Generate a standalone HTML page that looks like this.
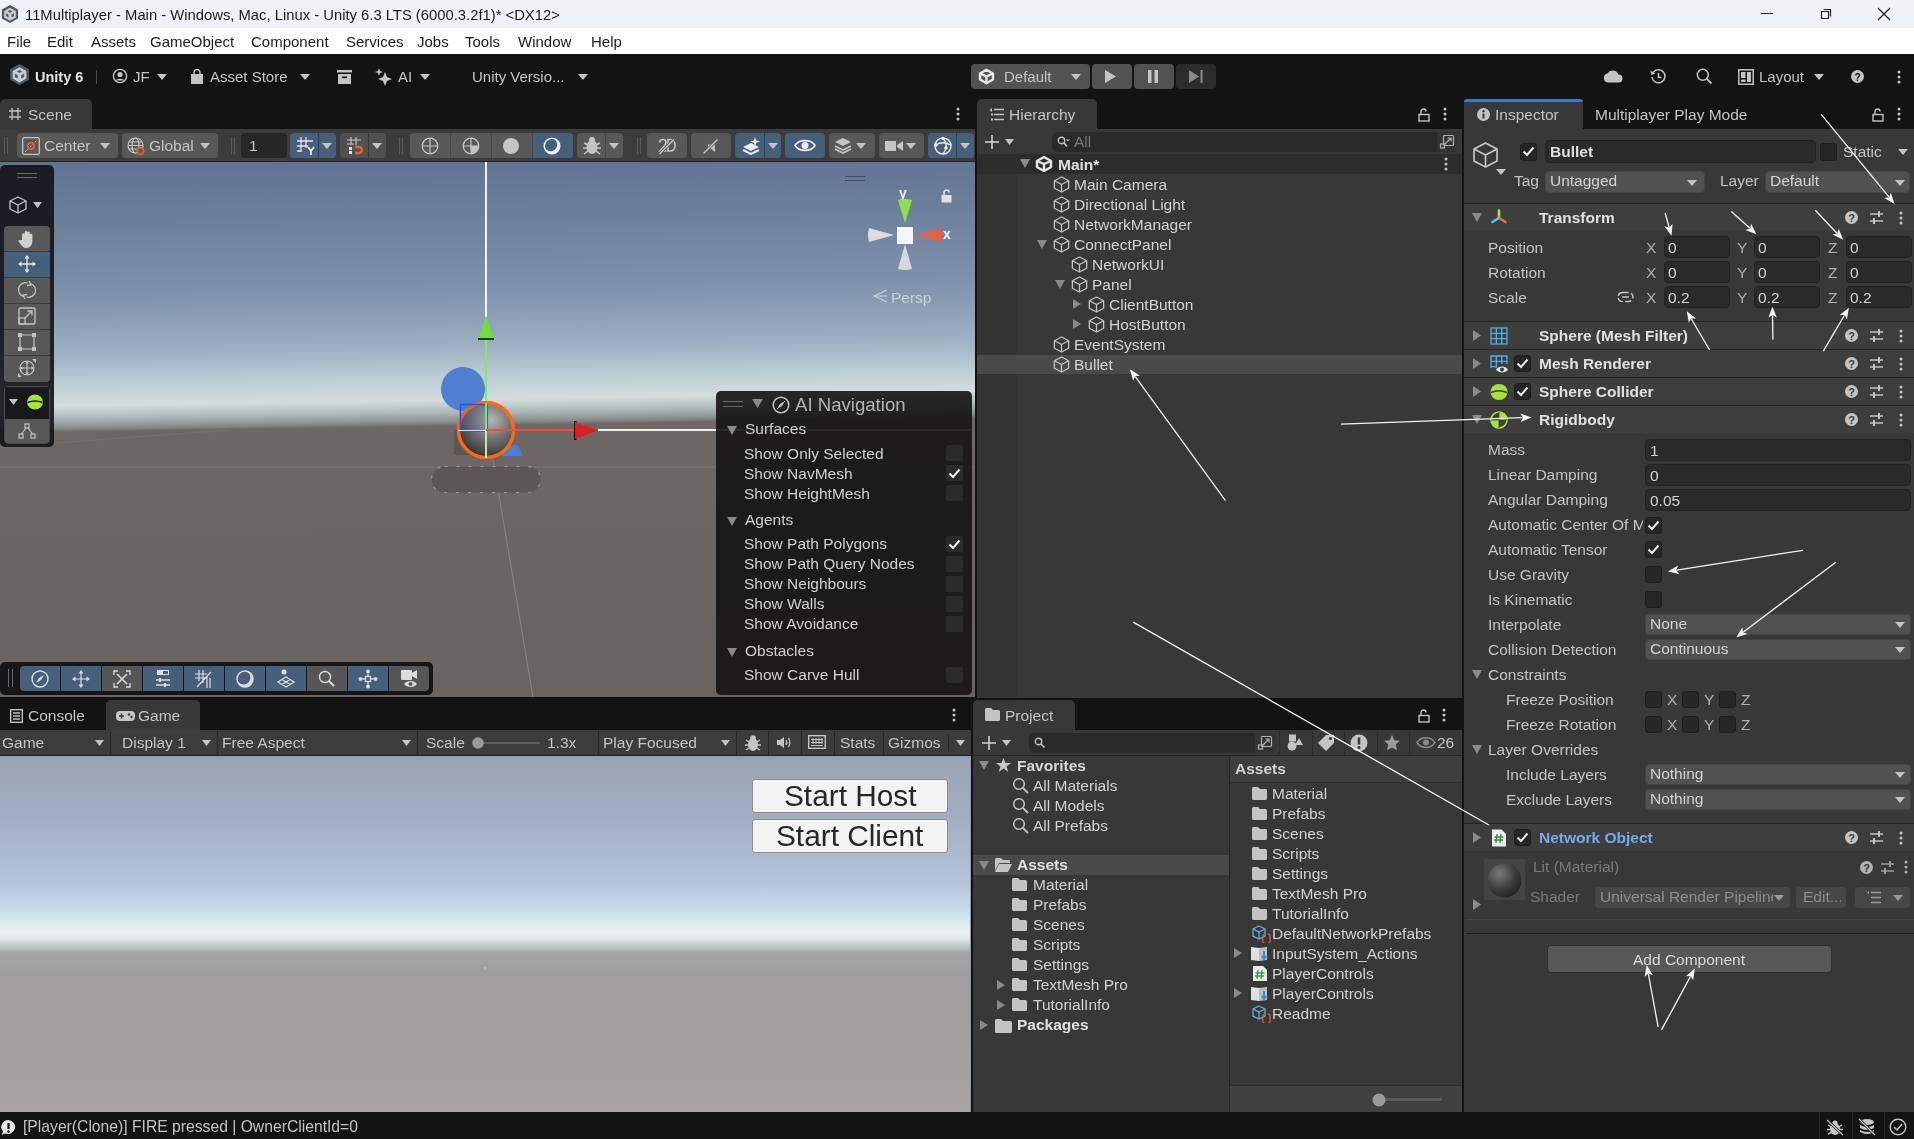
<!DOCTYPE html>
<html><head><meta charset="utf-8"><style>
*{margin:0;padding:0;box-sizing:border-box}
html,body{width:1914px;height:1139px;overflow:hidden;background:#131313}
body{position:relative;font-family:"Liberation Sans",sans-serif}
.a{position:absolute}
.t{white-space:nowrap;line-height:1;will-change:transform}
</style></head><body>
<div class="a" style="left:0px;top:0px;width:1914px;height:28px;background:#eef2f7;"></div>
<svg class="a" style="left:1px;top:5px;" width="18" height="18" viewBox="0 0 18 18"><path d="M9.00 0.00L17.10 4.50L17.10 13.50L9.00 18.00L0.90 13.50L0.90 4.50Z" fill="#4e5964"/><path d="M9.00 2.70L14.85 6.03L14.85 12.42L9.00 15.75L3.15 12.42L3.15 6.03Z" fill="#c9cdd2"/><path d="M9.00 5.04L11.34 6.39L9.00 7.74L6.66 6.39Z" fill="#4e5964"/><path d="M5.04 8.37L7.47 9.72L7.47 12.42L5.04 11.07Z" fill="#4e5964"/><path d="M12.96 8.37L10.53 9.72L10.53 12.42L12.96 11.07Z" fill="#4e5964"/></svg>
<div class="a t" style="left:25px;top:7.97px;font-size:14.8px;color:#1a1a1a;">11Multiplayer - Main - Windows, Mac, Linux - Unity 6.3 LTS (6000.3.2f1)* &lt;DX12&gt;</div>
<div class="a" style="left:1761px;top:13px;width:12px;height:1.3px;background:#222;"></div>
<svg class="a" style="left:1818px;top:6px;" width="16" height="16" viewBox="0 0 16 16"><path d="M3.5 5.5h7v7h-7z M5.5 3.5h7v7" fill="none" stroke="#222" stroke-width="1.2"/></svg>
<svg class="a" style="left:1876px;top:6px;" width="16" height="16" viewBox="0 0 16 16"><path d="M2 2L14 14M14 2L2 14" stroke="#222" stroke-width="1.3"/></svg>
<div class="a" style="left:0px;top:28px;width:1914px;height:26px;background:#ffffff;"></div>
<div class="a t" style="left:6.5px;top:33.80px;font-size:15px;color:#1a1a1a;">File</div>
<div class="a t" style="left:47px;top:33.80px;font-size:15px;color:#1a1a1a;">Edit</div>
<div class="a t" style="left:91px;top:33.80px;font-size:15px;color:#1a1a1a;">Assets</div>
<div class="a t" style="left:150px;top:33.80px;font-size:15px;color:#1a1a1a;">GameObject</div>
<div class="a t" style="left:251px;top:33.80px;font-size:15px;color:#1a1a1a;">Component</div>
<div class="a t" style="left:346px;top:33.80px;font-size:15px;color:#1a1a1a;">Services</div>
<div class="a t" style="left:417px;top:33.80px;font-size:15px;color:#1a1a1a;">Jobs</div>
<div class="a t" style="left:465px;top:33.80px;font-size:15px;color:#1a1a1a;">Tools</div>
<div class="a t" style="left:518px;top:33.80px;font-size:15px;color:#1a1a1a;">Window</div>
<div class="a t" style="left:591px;top:33.80px;font-size:15px;color:#1a1a1a;">Help</div>
<div class="a" style="left:0px;top:54px;width:1914px;height:45px;background:#131313;"></div>
<svg class="a" style="left:9px;top:64px;" width="21" height="21" viewBox="0 0 21 21"><path d="M10.50 0.00L19.95 5.25L19.95 15.75L10.50 21.00L1.05 15.75L1.05 5.25Z" fill="#4e5964"/><path d="M10.50 3.15L17.32 7.04L17.32 14.49L10.50 18.38L3.68 14.49L3.68 7.04Z" fill="#c9cdd2"/><path d="M10.50 5.88L13.23 7.46L10.50 9.03L7.77 7.46Z" fill="#4e5964"/><path d="M5.88 9.77L8.72 11.34L8.72 14.49L5.88 12.92Z" fill="#4e5964"/><path d="M15.12 9.77L12.29 11.34L12.29 14.49L15.12 12.92Z" fill="#4e5964"/></svg>
<div class="a t" style="left:35px;top:69.73px;font-size:14.5px;color:#e6e6e6;font-weight:bold;">Unity 6</div>
<div class="a" style="left:96px;top:70px;width:1px;height:14px;background:#4a4a4a;"></div>
<svg class="a" style="left:112px;top:68px;" width="16" height="16" viewBox="0 0 16 16"><circle cx="8" cy="8" r="6.6" fill="none" stroke="#c4c4c4" stroke-width="1.4"/><circle cx="8" cy="6.5" r="2.6" fill="#c4c4c4"/><path d="M3.5 12.5C5 10 11 10 12.5 12.5" fill="#c4c4c4"/></svg>
<div class="a t" style="left:133px;top:69.30px;font-size:15px;color:#c4c4c4;">JF</div>
<svg class="a" style="left:156.5px;top:74.0px;" width="10" height="6" viewBox="0 0 10 6"><path d="M0 0H10L5.0 6Z" fill="#c4c4c4"/></svg>
<svg class="a" style="left:190px;top:69px;" width="14" height="16" viewBox="0 0 14 16"><path d="M1 5h12v10H1z" fill="#c4c4c4"/><path d="M4 5V3.5a3 3 0 0 1 6 0V5" fill="none" stroke="#c4c4c4" stroke-width="1.4"/></svg>
<div class="a t" style="left:210px;top:69.30px;font-size:15px;color:#c4c4c4;">Asset Store</div>
<svg class="a" style="left:300.0px;top:74.0px;" width="10" height="6" viewBox="0 0 10 6"><path d="M0 0H10L5.0 6Z" fill="#c4c4c4"/></svg>
<svg class="a" style="left:337px;top:70px;" width="15" height="14" viewBox="0 0 15 14"><rect x="0" y="0" width="15" height="2.5" fill="#c4c4c4"/><path d="M1 4h13v10H1z" fill="#c4c4c4"/><rect x="5" y="6.5" width="5" height="1.6" fill="#131313"/></svg>
<svg class="a" style="left:375px;top:68px;" width="19" height="18" viewBox="0 0 19 18"><path d="M10 4L12 9L17 11L12 13L10 18L8 13L3 11L8 9Z" fill="#c4c4c4"/><path d="M4 0L5 3L8 4L5 5L4 8L3 5L0 4L3 3Z" fill="#c4c4c4"/></svg>
<div class="a t" style="left:398px;top:69.30px;font-size:15px;color:#c4c4c4;">AI</div>
<svg class="a" style="left:419.5px;top:74.0px;" width="10" height="6" viewBox="0 0 10 6"><path d="M0 0H10L5.0 6Z" fill="#c4c4c4"/></svg>
<div class="a t" style="left:472px;top:69.30px;font-size:15px;color:#c4c4c4;">Unity Versio...</div>
<svg class="a" style="left:577.5px;top:74.0px;" width="10" height="6" viewBox="0 0 10 6"><path d="M0 0H10L5.0 6Z" fill="#c4c4c4"/></svg>
<div class="a" style="left:971px;top:64px;width:119px;height:25px;background:#525252;border-radius:4px;"></div>
<svg class="a" style="left:978px;top:68px;" width="17" height="17" viewBox="0 0 17 17"><g fill="none" stroke="#e8e8e8" stroke-width="2.38" stroke-linejoin="round"><path d="M8.5 1.7000000000000002L14.96 5.44V11.56L8.5 15.3L2.04 11.56V5.44Z"/><path d="M8.5 8.5V15.3M8.5 8.5L2.04 5.44M8.5 8.5L14.96 5.44"/></g></svg>
<div class="a t" style="left:1004px;top:69.30px;font-size:15px;color:#c4c4c4;">Default</div>
<svg class="a" style="left:1071.0px;top:74.0px;" width="10" height="6" viewBox="0 0 10 6"><path d="M0 0H10L5.0 6Z" fill="#c4c4c4"/></svg>
<div class="a" style="left:1092px;top:64px;width:40px;height:25px;background:#525252;border-radius:4px;"></div>
<svg class="a" style="left:1105px;top:70px;" width="12" height="13" viewBox="0 0 12 13"><path d="M0 0L11 6.5L0 13Z" fill="#c4c4c4"/></svg>
<div class="a" style="left:1134px;top:64px;width:40px;height:25px;background:#525252;border-radius:4px;"></div>
<svg class="a" style="left:1147px;top:70px;" width="13" height="13" viewBox="0 0 13 13"><rect x="1" y="0" width="3.5" height="13" fill="#c4c4c4"/><rect x="7.5" y="0" width="3.5" height="13" fill="#c4c4c4"/></svg>
<div class="a" style="left:1176px;top:64px;width:40px;height:25px;background:#2c2c2c;border-radius:4px;"></div>
<svg class="a" style="left:1189px;top:70px;" width="14" height="13" viewBox="0 0 14 13"><path d="M0 0L10 6.5L0 13Z" fill="#8a8a8a"/><rect x="11.5" y="0" width="2" height="13" fill="#8a8a8a"/></svg>
<svg class="a" style="left:1603px;top:69px;" width="20" height="14" viewBox="0 0 20 14"><path d="M5 13.5A4.5 4.5 0 0 1 4.5 4.6A6 6 0 0 1 15.5 5.5A4 4 0 0 1 15.5 13.5Z" fill="#c4c4c4"/></svg>
<svg class="a" style="left:1650px;top:68px;" width="17" height="17" viewBox="0 0 17 17"><path d="M3.2 4.5A6.5 6.5 0 1 1 2 9" fill="none" stroke="#c4c4c4" stroke-width="1.5"/><path d="M0.5 2.5L1.2 7L5.5 5.6Z" fill="#c4c4c4"/><path d="M8.5 5V9.5H11.5" fill="none" stroke="#c4c4c4" stroke-width="1.6"/></svg>
<svg class="a" style="left:1696px;top:68px;" width="17" height="17" viewBox="0 0 17 17"><circle cx="6.8" cy="6.8" r="5.5" fill="none" stroke="#c4c4c4" stroke-width="1.5"/><path d="M10.8 10.8L15.5 15.5" stroke="#c4c4c4" stroke-width="1.8"/></svg>
<svg class="a" style="left:1738px;top:69px;" width="16" height="16" viewBox="0 0 16 16"><rect x="0.8" y="0.8" width="14.4" height="14.4" fill="none" stroke="#c4c4c4" stroke-width="1.5"/><rect x="3" y="3" width="4.5" height="6" fill="#c4c4c4"/><rect x="9" y="3" width="4" height="10" fill="#c4c4c4"/><rect x="3" y="10.5" width="4.5" height="2.5" fill="#c4c4c4"/></svg>
<div class="a t" style="left:1759px;top:69.30px;font-size:15px;color:#c4c4c4;">Layout</div>
<svg class="a" style="left:1814.0px;top:74.0px;" width="10" height="6" viewBox="0 0 10 6"><path d="M0 0H10L5.0 6Z" fill="#c4c4c4"/></svg>
<svg class="a" style="left:1851px;top:70px;" width="13" height="13" viewBox="0 0 13 13"><circle cx="6.5" cy="6.5" r="6.5" fill="#c4c4c4"/><text x="6.5" y="10.5" font-size="10" font-weight="bold" text-anchor="middle" fill="#131313" font-family="Liberation Sans">?</text></svg>
<svg class="a" style="left:1896px;top:69px;" width="6" height="16" viewBox="0 0 6 16"><circle cx="3" cy="3" r="1.5" fill="#c4c4c4"/><circle cx="3" cy="8" r="1.5" fill="#c4c4c4"/><circle cx="3" cy="13" r="1.5" fill="#c4c4c4"/></svg>
<div class="a" style="left:0px;top:99px;width:92px;height:31px;background:#383838;border-radius:5px 5px 0 0;"></div>
<svg class="a" style="left:8px;top:107px;" width="14" height="14" viewBox="0 0 14 14"><path d="M4 1V13M10 1V13M1 4H13M1 10H13" stroke="#c4c4c4" stroke-width="1.3"/></svg>
<div class="a t" style="left:28px;top:106.88px;font-size:15.5px;color:#c4c4c4;">Scene</div>
<svg class="a" style="left:955px;top:106px;" width="6" height="16" viewBox="0 0 6 16"><circle cx="3" cy="3" r="1.5" fill="#c4c4c4"/><circle cx="3" cy="8" r="1.5" fill="#c4c4c4"/><circle cx="3" cy="13" r="1.5" fill="#c4c4c4"/></svg>
<div class="a" style="left:0px;top:129px;width:975px;height:33px;background:#3c3c3c;"></div>
<div class="a" style="left:0px;top:161px;width:975px;height:1px;background:#232323;"></div>
<div class="a" style="left:4px;top:137px;width:1px;height:17px;background:#5a5a5a;"></div>
<div class="a" style="left:7px;top:137px;width:1px;height:17px;background:#5a5a5a;"></div>
<div class="a" style="left:17px;top:133px;width:101px;height:25px;background:#585858;border-radius:4px;"></div>
<svg class="a" style="left:22px;top:137px;" width="18" height="18" viewBox="0 0 18 18"><rect x="0.7" y="0.7" width="16.6" height="16.6" rx="1.5" fill="none" stroke="#c4c4c4" stroke-width="1.3"/><path d="M3 15L15 3" stroke="#c4c4c4" stroke-width="1" stroke-dasharray="2 1.5"/><circle cx="9" cy="9" r="3.2" fill="none" stroke="#f0602a" stroke-width="1.6"/></svg>
<div class="a t" style="left:44px;top:137.88px;font-size:15.5px;color:#c4c4c4;">Center</div>
<svg class="a" style="left:99.5px;top:142.5px;" width="10" height="6" viewBox="0 0 10 6"><path d="M0 0H10L5.0 6Z" fill="#c4c4c4"/></svg>
<div class="a" style="left:122px;top:133px;width:96px;height:25px;background:#585858;border-radius:4px;"></div>
<svg class="a" style="left:127px;top:137px;" width="19" height="19" viewBox="0 0 19 19"><circle cx="8.5" cy="8.5" r="7.5" fill="none" stroke="#c4c4c4" stroke-width="1.2"/><ellipse cx="8.5" cy="8.5" rx="3.5" ry="7.5" fill="none" stroke="#c4c4c4" stroke-width="1.2"/><path d="M1 8.5H16M2 5H15M2 12H15" stroke="#c4c4c4" stroke-width="1.1"/><circle cx="13.5" cy="14" r="3.3" fill="#585858" stroke="#f0602a" stroke-width="1.7"/></svg>
<div class="a t" style="left:149px;top:137.88px;font-size:15.5px;color:#c4c4c4;">Global</div>
<svg class="a" style="left:200.0px;top:142.5px;" width="10" height="6" viewBox="0 0 10 6"><path d="M0 0H10L5.0 6Z" fill="#c4c4c4"/></svg>
<div class="a" style="left:231px;top:137px;width:1px;height:17px;background:#5a5a5a;"></div>
<div class="a" style="left:234px;top:137px;width:1px;height:17px;background:#5a5a5a;"></div>
<div class="a" style="left:241px;top:133px;width:46px;height:25px;background:#262626;border-radius:4px;"></div>
<div class="a t" style="left:249px;top:137.88px;font-size:15.5px;color:#c4c4c4;">1</div>
<div class="a" style="left:290px;top:133px;width:46px;height:25px;background:#46607c;border-radius:4px;"></div>
<div class="a" style="left:318px;top:133px;width:1px;height:25px;background:#2f4157;"></div>
<svg class="a" style="left:296px;top:136px;" width="20" height="19" viewBox="0 0 20 19"><path d="M5 1V16M10 1V12M1 5H17M1 10H12M1 15H5" stroke="#e6e6e6" stroke-width="1.3"/><path d="M12 11L15 15L18 11M15 15V19" stroke="#e6e6e6" stroke-width="1.8" fill="none"/></svg>
<svg class="a" style="left:322.0px;top:142.5px;" width="10" height="6" viewBox="0 0 10 6"><path d="M0 0H10L5.0 6Z" fill="#c4c4c4"/></svg>
<div class="a" style="left:340px;top:133px;width:46px;height:25px;background:#505050;border-radius:4px;"></div>
<div class="a" style="left:368px;top:133px;width:1px;height:25px;background:#3a3a3a;"></div>
<svg class="a" style="left:346px;top:136px;" width="20" height="19" viewBox="0 0 20 19"><path d="M5 1V9M10 1V9M1 4H15M1 8H8" stroke="#c4c4c4" stroke-width="1.2"/><rect x="3" y="11" width="3" height="3" fill="#e6e6e6"/><rect x="3" y="15" width="3" height="3" fill="#e6e6e6"/><path d="M9 11H13A3 3 0 0 1 13 17H9" fill="none" stroke="#f0602a" stroke-width="2.4"/></svg>
<svg class="a" style="left:372.0px;top:142.5px;" width="10" height="6" viewBox="0 0 10 6"><path d="M0 0H10L5.0 6Z" fill="#c4c4c4"/></svg>
<div class="a" style="left:399px;top:137px;width:1px;height:17px;background:#5a5a5a;"></div>
<div class="a" style="left:402px;top:137px;width:1px;height:17px;background:#5a5a5a;"></div>
<div class="a" style="left:410px;top:133px;width:163px;height:25px;background:#585858;border-radius:4px;"></div>
<div class="a" style="left:532px;top:133px;width:41px;height:25px;background:#46607c;border-radius:0 4px 4px 0;"></div>
<div class="a" style="left:450px;top:133px;width:1px;height:25px;background:#474747;"></div>
<div class="a" style="left:491px;top:133px;width:1px;height:25px;background:#474747;"></div>
<div class="a" style="left:532px;top:133px;width:1px;height:25px;background:#474747;"></div>
<svg class="a" style="left:421px;top:137px;" width="18" height="18" viewBox="0 0 18 18"><circle cx="9" cy="9" r="7.8" fill="none" stroke="#c4c4c4" stroke-width="1.3"/><path d="M1.5 9H16.5M9 1.5V16.5" stroke="#c4c4c4" stroke-width="1.2"/></svg>
<svg class="a" style="left:462px;top:137px;" width="18" height="18" viewBox="0 0 18 18"><circle cx="9" cy="9" r="7.8" fill="none" stroke="#c4c4c4" stroke-width="1.3"/><path d="M1.5 9H16.5M9 1.5V16.5" stroke="#c4c4c4" stroke-width="1.2"/><path d="M16.5 9A7.5 7.5 0 0 1 9 16.5V9Z" fill="#c4c4c4"/></svg>
<svg class="a" style="left:502px;top:137px;" width="18" height="18" viewBox="0 0 18 18"><circle cx="9" cy="9" r="8" fill="#c4c4c4"/></svg>
<svg class="a" style="left:543px;top:137px;" width="18" height="18" viewBox="0 0 18 18"><circle cx="9" cy="9" r="7.8" fill="#ececec"/><circle cx="7.6" cy="7.6" r="6.6" fill="#46607c"/><circle cx="9" cy="9" r="7.8" fill="none" stroke="#ececec" stroke-width="1.5"/></svg>
<div class="a" style="left:577px;top:133px;width:46px;height:25px;background:#585858;border-radius:4px;"></div>
<div class="a" style="left:605px;top:133px;width:1px;height:25px;background:#474747;"></div>
<svg class="a" style="left:582px;top:136px;" width="20" height="19" viewBox="0 0 20 19"><ellipse cx="10" cy="11" rx="5.5" ry="7" fill="#c4c4c4"/><circle cx="10" cy="4" r="3" fill="#c4c4c4"/><path d="M2 7L6 9M18 7L14 9M1 12H5M19 12H15M2 18L6 15M18 18L14 15" stroke="#c4c4c4" stroke-width="1.5"/></svg>
<svg class="a" style="left:609.0px;top:142.5px;" width="10" height="6" viewBox="0 0 10 6"><path d="M0 0H10L5.0 6Z" fill="#c4c4c4"/></svg>
<div class="a" style="left:637px;top:137px;width:1px;height:17px;background:#5a5a5a;"></div>
<div class="a" style="left:640px;top:137px;width:1px;height:17px;background:#5a5a5a;"></div>
<div class="a" style="left:647px;top:133px;width:40px;height:25px;background:#585858;border-radius:4px;"></div>
<svg class="a" style="left:657px;top:137px;" width="20" height="18" viewBox="0 0 20 18"><path d="M2.5 5.5Q3 2.5 6 2.5Q9 2.5 9 5.5Q9 7.5 6.5 10L3 14H9.5" fill="none" stroke="#c4c4c4" stroke-width="1.6"/><path d="M11 2.5H13Q18 2.5 18 8.5Q18 14 13 14H11Z" fill="none" stroke="#c4c4c4" stroke-width="1.6"/><path d="M2.5 17L17 2.5" stroke="#585858" stroke-width="3"/><path d="M2.5 17L17 2.5" stroke="#c4c4c4" stroke-width="1.4"/></svg>
<div class="a" style="left:691px;top:133px;width:40px;height:25px;background:#585858;border-radius:4px;"></div>
<svg class="a" style="left:701px;top:137px;" width="20" height="18" viewBox="0 0 20 18"><path d="M7 7.5H9.5L14 4V15L9.5 11.5H7Z" fill="#c4c4c4"/><path d="M2.5 16.5L16.5 2.5" stroke="#585858" stroke-width="3"/><path d="M2.5 16.5L16.5 2.5" stroke="#c4c4c4" stroke-width="1.4"/></svg>
<div class="a" style="left:735px;top:133px;width:46px;height:25px;background:#46607c;border-radius:4px;"></div>
<div class="a" style="left:764px;top:133px;width:1px;height:25px;background:#2f4157;"></div>
<svg class="a" style="left:742px;top:136px;" width="20" height="19" viewBox="0 0 20 19"><path d="M1 11L9 7L17 11L9 15Z" fill="#ececec"/><path d="M1 14L9 18L17 14" stroke="#ececec" stroke-width="2" fill="none"/><path d="M13 1L14.2 4.5L18 5.5L14.2 6.7L13 10L11.8 6.7L8 5.5L11.8 4.5Z" fill="#ececec"/></svg>
<svg class="a" style="left:768.0px;top:142.5px;" width="10" height="6" viewBox="0 0 10 6"><path d="M0 0H10L5.0 6Z" fill="#c4c4c4"/></svg>
<div class="a" style="left:785px;top:133px;width:40px;height:25px;background:#46607c;border-radius:4px;"></div>
<svg class="a" style="left:794px;top:139px;" width="22" height="13" viewBox="0 0 22 13"><path d="M1 6.5C5 0 17 0 21 6.5C17 13 5 13 1 6.5Z" fill="none" stroke="#ececec" stroke-width="1.6"/><circle cx="11" cy="6.5" r="3.5" fill="#ececec"/></svg>
<div class="a" style="left:829px;top:133px;width:46px;height:25px;background:#585858;border-radius:4px;"></div>
<svg class="a" style="left:834px;top:137px;" width="18" height="17" viewBox="0 0 18 17"><path d="M1 5L9 1L17 5L9 9Z" fill="#c4c4c4"/><path d="M1 9L9 13L17 9M1 12L9 16L17 12" stroke="#c4c4c4" stroke-width="1.8" fill="none"/></svg>
<svg class="a" style="left:856.0px;top:142.5px;" width="10" height="6" viewBox="0 0 10 6"><path d="M0 0H10L5.0 6Z" fill="#c4c4c4"/></svg>
<div class="a" style="left:879px;top:133px;width:45px;height:25px;background:#585858;border-radius:4px;"></div>
<svg class="a" style="left:885px;top:139px;" width="18" height="14" viewBox="0 0 18 14"><rect x="0" y="2" width="11" height="10" fill="#c4c4c4"/><path d="M12 6L18 2V12L12 8Z" fill="#c4c4c4"/></svg>
<svg class="a" style="left:906.0px;top:142.5px;" width="10" height="6" viewBox="0 0 10 6"><path d="M0 0H10L5.0 6Z" fill="#c4c4c4"/></svg>
<div class="a" style="left:928px;top:133px;width:46px;height:25px;background:#46607c;border-radius:4px;"></div>
<div class="a" style="left:956px;top:133px;width:1px;height:25px;background:#2f4157;"></div>
<svg class="a" style="left:933px;top:136px;" width="20" height="20" viewBox="0 0 20 20"><circle cx="10" cy="10" r="8" fill="none" stroke="#ececec" stroke-width="1.5"/><path d="M3 9C7 6 13 6 17 9M10 2C14 7 14 13 10 18" stroke="#ececec" stroke-width="1.3" fill="none"/><circle cx="10" cy="2.5" r="1.8" fill="#ececec"/><circle cx="3" cy="9" r="1.8" fill="#ececec"/><circle cx="13" cy="12" r="1.8" fill="#ececec"/></svg>
<svg class="a" style="left:960.0px;top:142.5px;" width="10" height="6" viewBox="0 0 10 6"><path d="M0 0H10L5.0 6Z" fill="#c4c4c4"/></svg>
<div class="a" style="left:0;top:162px;width:975px;height:535px;background:linear-gradient(179.1deg,#5f7290 0px,#6c7f9b 60px,#8094ae 140px,#9fb1c3 194px,#bccdd6 222px,#d3dddd 245px,#aebab9 257px,#959b9c 264px,#838685 268px,#6d6866 271px,#6a6461 535px);"></div>
<svg class="a" style="left:0px;top:162px;" width="975" height="535" viewBox="0 0 975 535"><path d="M0 305L975 305" stroke="#7d7773" stroke-width="1"/><path d="M0 285L230 268" stroke="#77716e" stroke-width="1"/><path d="M488 268L533 535" stroke="#8a8480" stroke-width="1"/></svg>
<div class="a" style="left:0px;top:165px;width:54px;height:282px;background:rgba(20,22,26,0.92);border-radius:5px;"></div>
<div class="a" style="left:17px;top:173px;width:20px;height:1.2px;background:#6a6a6a;"></div>
<div class="a" style="left:17px;top:177px;width:20px;height:1.2px;background:#6a6a6a;"></div>
<svg class="a" style="left:8px;top:195px;" width="20" height="20" viewBox="0 0 20 20"><g fill="none" stroke="#c4c4c4" stroke-width="1.3" stroke-linejoin="round"><path d="M10 2L18 6V14L10 18L2 14V6Z"/><path d="M2 6L10 10L18 6M10 10V18"/></g></svg>
<svg class="a" style="left:33.0px;top:202.0px;" width="9" height="6" viewBox="0 0 9 6"><path d="M0 0H9L4.5 6Z" fill="#c4c4c4"/></svg>
<div class="a" style="left:4px;top:226px;width:46px;height:156px;background:#585858;border-radius:4px;"></div>
<div class="a" style="left:4px;top:252px;width:46px;height:25px;background:#46607c;"></div>
<div class="a" style="left:4px;top:251px;width:46px;height:1px;background:#3c3c3c;"></div>
<div class="a" style="left:4px;top:277px;width:46px;height:1px;background:#3c3c3c;"></div>
<div class="a" style="left:4px;top:303px;width:46px;height:1px;background:#3c3c3c;"></div>
<div class="a" style="left:4px;top:329px;width:46px;height:1px;background:#3c3c3c;"></div>
<div class="a" style="left:4px;top:355px;width:46px;height:1px;background:#3c3c3c;"></div>
<svg class="a" style="left:17px;top:229px;" width="20" height="20" viewBox="0 0 20 20"><path d="M5 11V5.5a1.3 1.3 0 0 1 2.6 0V10V3.2a1.3 1.3 0 0 1 2.6 0V10V3.8a1.3 1.3 0 0 1 2.6 0V10.5V6a1.3 1.3 0 0 1 2.6 0V12C15.4 16 13 19 9.5 19C6.5 19 5 17 3 14.5L1.5 12.5C1 11.8 2.2 10.6 3 11.2Z" fill="#d0d0d0"/></svg>
<svg class="a" style="left:17px;top:254px;" width="20" height="20" viewBox="0 0 20 20"><path d="M10 2V18M2 10H18" stroke="#e6e6e6" stroke-width="1.3"/><path d="M10 1L7.5 4.5H12.5ZM10 19L7.5 15.5H12.5ZM1 10L4.5 7.5V12.5ZM19 10L15.5 7.5V12.5Z" fill="#e6e6e6"/></svg>
<svg class="a" style="left:17px;top:280px;" width="20" height="20" viewBox="0 0 20 20"><path d="M13.5 3.5A7 7 0 0 1 9.5 17M6.5 16.5A7 7 0 0 1 10.5 3" fill="none" stroke="#c4c4c4" stroke-width="1.3"/><path d="M12 1L14 5L10 5.5M8 19L6 15L10 14.5" fill="none" stroke="#c4c4c4" stroke-width="1.3"/></svg>
<svg class="a" style="left:17px;top:306px;" width="20" height="20" viewBox="0 0 20 20"><rect x="2" y="2" width="16" height="16" rx="1.5" fill="none" stroke="#c4c4c4" stroke-width="1.3"/><rect x="2" y="12" width="6" height="6" fill="none" stroke="#c4c4c4" stroke-width="1.3"/><path d="M8 12L15 5M10.5 5H15V9.5" fill="none" stroke="#c4c4c4" stroke-width="1.3"/></svg>
<svg class="a" style="left:17px;top:332px;" width="20" height="20" viewBox="0 0 20 20"><path d="M5 3H15M5 17H15M3 5V15M17 5V15" stroke="#c4c4c4" stroke-width="1.2"/><rect x="1" y="1" width="4" height="4" fill="#c4c4c4"/><rect x="15" y="1" width="4" height="4" fill="#c4c4c4"/><rect x="1" y="15" width="4" height="4" fill="#c4c4c4"/><rect x="15" y="15" width="4" height="4" fill="#c4c4c4"/></svg>
<svg class="a" style="left:17px;top:358px;" width="20" height="20" viewBox="0 0 20 20"><circle cx="10" cy="10" r="7" fill="none" stroke="#c4c4c4" stroke-width="1.2"/><path d="M10 4V16M4 10H16" stroke="#c4c4c4" stroke-width="1.2"/><path d="M10 3L8 5.5H12ZM10 17L8 14.5H12ZM3 10L5.5 8V12ZM17 10L14.5 8V12Z" fill="#c4c4c4"/><path d="M15 1H19V5ZM1 19V15L5 19Z" fill="#c4c4c4"/></svg>
<div class="a" style="left:4px;top:386px;width:46px;height:58px;background:#585858;border-radius:4px;border:1px solid #4a4a4a;"></div>
<div class="a" style="left:5px;top:387px;width:44px;height:32px;background:#17191d;"></div>
<svg class="a" style="left:9.0px;top:399.0px;" width="9" height="6" viewBox="0 0 9 6"><path d="M0 0H9L4.5 6Z" fill="#c4c4c4"/></svg>
<svg class="a" style="left:26px;top:394px;" width="18" height="16" viewBox="0 0 18 16"><ellipse cx="9" cy="8" rx="8" ry="7.5" fill="#a6e23b"/><path d="M1.5 8.5Q9 5.5 16.5 8.5" stroke="#17191d" stroke-width="1.6" fill="none"/></svg>
<svg class="a" style="left:17px;top:421px;" width="20" height="20" viewBox="0 0 20 20"><rect x="2" y="13" width="4" height="4" fill="none" stroke="#c4c4c4" stroke-width="1.2"/><rect x="8" y="3" width="4" height="4" fill="none" stroke="#c4c4c4" stroke-width="1.2"/><rect x="14" y="13" width="4" height="4" fill="none" stroke="#c4c4c4" stroke-width="1.2"/><path d="M4.5 13L9 7M11 7L15.5 13" stroke="#c4c4c4" stroke-width="1.2"/></svg>
<div class="a" style="left:485px;top:162px;width:1.6px;height:155px;background:#f2f2f2;"></div>
<div class="a" style="left:485.2px;top:339px;width:1.6px;height:91px;background:#7cf04a;"></div>
<svg class="a" style="left:476px;top:316px;" width="20" height="25" viewBox="0 0 20 25"><path d="M10 0L18 23H2Z" fill="#6be03a"/><rect x="2" y="22" width="16" height="2" fill="#1a3a10"/></svg>
<svg class="a" style="left:440px;top:366px;" width="46" height="46" viewBox="0 0 46 46"><circle cx="23" cy="23" r="22" fill="#4f7fd0"/></svg>
<div class="a" style="left:454px;top:430px;width:35px;height:25px;background:rgba(80,78,76,0.6);"></div>
<svg class="a" style="left:455px;top:399px;" width="62" height="62" viewBox="0 0 62 62"><defs><radialGradient id="sg" cx="0.6" cy="0.32" r="0.7"><stop offset="0" stop-color="#b8b6b2"/><stop offset="0.45" stop-color="#7a7876"/><stop offset="1" stop-color="#343434"/></radialGradient></defs><path d="M44 52L67 56H40Z" fill="#4f7fd0"/><circle cx="31" cy="31" r="27.5" fill="url(#sg)" stroke="#ff6a10" stroke-width="3"/></svg>
<svg class="a" style="left:500px;top:440px;" width="24" height="18" viewBox="0 0 24 18"><path d="M2 16Q12 2 18 6L23 16Z" fill="#4f7fd0"/></svg>
<svg class="a" style="left:455px;top:399px;" width="62" height="62" viewBox="0 0 62 62"><circle cx="31" cy="31" r="27.5" fill="none" stroke="#ff6a10" stroke-width="3.2"/></svg>
<svg class="a" style="left:459px;top:403px;" width="30" height="30" viewBox="0 0 30 30"><rect x="1.5" y="1.5" width="26.5" height="26.5" fill="rgba(90,100,160,0.25)" stroke="#2a4cf0" stroke-width="1.6"/></svg>
<div class="a" style="left:485.2px;top:403px;width:1.6px;height:28px;background:#7cf04a;"></div>
<div class="a" style="left:458px;top:429.5px;width:28px;height:1.4px;background:#d8e8c0;"></div>
<div class="a" style="left:486px;top:429.3px;width:90px;height:1.6px;background:#f04a3a;"></div>
<div class="a" style="left:485.2px;top:431px;width:1.4px;height:27px;background:#c8e8b0;"></div>
<svg class="a" style="left:573px;top:421px;" width="26" height="19" viewBox="0 0 26 19"><rect x="1" y="0" width="2.5" height="19" fill="#1a1010"/><path d="M2 1L25 9.5L2 18Z" fill="#e02020"/></svg>
<div class="a" style="left:598px;top:429.3px;width:373px;height:1.6px;background:#efefef;"></div>
<svg class="a" style="left:430px;top:465px;" width="112" height="29" viewBox="0 0 112 29"><rect x="1.5" y="1.5" width="109" height="26" rx="13" fill="#5a5756" stroke="rgba(220,215,210,0.45)" stroke-width="1.2" stroke-dasharray="3 9"/></svg>
<div class="a" style="left:845px;top:176px;width:20px;height:1.3px;background:#4a4a4a;"></div>
<div class="a" style="left:845px;top:179.5px;width:20px;height:1.3px;background:#4a4a4a;"></div>
<div class="a t" style="left:899px;top:186.15px;font-size:14px;color:#f0f0f0;font-weight:bold;">y</div>
<svg class="a" style="left:897px;top:199px;" width="16" height="25" viewBox="0 0 16 25"><path d="M1 1Q8 -1 15 1L8 24Z" fill="#8ee04a"/></svg>
<svg class="a" style="left:868px;top:227px;" width="27" height="16" viewBox="0 0 27 16"><path d="M1 1Q-1 8 1 15L26 8Z" fill="#dcdcdc"/></svg>
<div class="a" style="left:897px;top:227px;width:16px;height:17px;background:#f4f6fa;"></div>
<svg class="a" style="left:915px;top:227px;" width="27" height="16" viewBox="0 0 27 16"><path d="M26 1Q28 8 26 15L0 8Z" fill="#e35f4a"/></svg>
<div class="a t" style="left:943px;top:227.15px;font-size:14px;color:#f0f0f0;font-weight:bold;">x</div>
<svg class="a" style="left:897px;top:244px;" width="16" height="26" viewBox="0 0 16 26"><path d="M8 0L15 25Q8 27 1 25Z" fill="#d8d8d8"/></svg>
<svg class="a" style="left:941px;top:189px;" width="11" height="14" viewBox="0 0 11 14"><path d="M3 6V3.5a2.5 2.5 0 0 1 5 0" fill="none" stroke="#e0e0e0" stroke-width="1.5"/><rect x="0.5" y="6" width="10" height="7.5" fill="#e0e0e0"/></svg>
<svg class="a" style="left:873px;top:289px;" width="15" height="14" viewBox="0 0 15 14"><path d="M14 1L1 7L14 13M14 7H1" fill="none" stroke="rgba(225,230,236,0.7)" stroke-width="1.2"/></svg>
<div class="a t" style="left:891px;top:289.88px;font-size:15.5px;color:rgba(225,230,236,0.7);">Persp</div>
<div class="a" style="left:0px;top:662px;width:433px;height:33px;background:rgba(18,18,20,0.95);border-radius:5px;"></div>
<div class="a" style="left:8px;top:669px;width:1.2px;height:18px;background:#6a6a6a;"></div>
<div class="a" style="left:11.5px;top:669px;width:1.2px;height:18px;background:#6a6a6a;"></div>
<div class="a" style="left:20px;top:666px;width:40px;height:25px;background:#46607c;border-radius:4px 0 0 4px;"></div>
<div class="a" style="left:61px;top:666px;width:40px;height:25px;background:#46607c;"></div>
<div class="a" style="left:102px;top:666px;width:40px;height:25px;background:#565656;"></div>
<div class="a" style="left:143px;top:666px;width:40px;height:25px;background:#46607c;"></div>
<div class="a" style="left:184px;top:666px;width:40px;height:25px;background:#46607c;"></div>
<div class="a" style="left:225px;top:666px;width:40px;height:25px;background:#46607c;"></div>
<div class="a" style="left:266px;top:666px;width:40px;height:25px;background:#46607c;"></div>
<div class="a" style="left:307px;top:666px;width:40px;height:25px;background:#565656;"></div>
<div class="a" style="left:348px;top:666px;width:40px;height:25px;background:#46607c;"></div>
<div class="a" style="left:389px;top:666px;width:40px;height:25px;background:#565656;border-radius:0 4px 4px 0;"></div>
<svg class="a" style="left:30px;top:668.5px;" width="20" height="20" viewBox="0 0 20 20"><circle cx="10" cy="10" r="8" fill="none" stroke="#dcdcdc" stroke-width="1.4"/><path d="M14 6L11 11L6 14L9 9Z" fill="#dcdcdc"/></svg>
<svg class="a" style="left:71px;top:668.5px;" width="20" height="20" viewBox="0 0 20 20"><path d="M10 2V18M2 10H18" stroke="#dcdcdc" stroke-width="1.2"/><path d="M10 1L7.5 4.5H12.5ZM10 19L7.5 15.5H12.5ZM1 10L4.5 7.5V12.5ZM19 10L15.5 7.5V12.5Z" fill="#dcdcdc"/></svg>
<svg class="a" style="left:112px;top:668.5px;" width="20" height="20" viewBox="0 0 20 20"><path d="M2 6V2H6M14 2H18V6M18 14V18H14M6 18H2V14" fill="none" stroke="#dcdcdc" stroke-width="1.3"/><path d="M5 15L15 5M5 5L15 15" stroke="#dcdcdc" stroke-width="1.6"/></svg>
<svg class="a" style="left:153px;top:668.5px;" width="20" height="20" viewBox="0 0 20 20"><rect x="4" y="1" width="12" height="5" fill="#dcdcdc"/><rect x="10" y="2" width="5" height="3" fill="#46607c"/><path d="M3 11H17M3 16H17" stroke="#dcdcdc" stroke-width="1.3"/><rect x="6" y="9" width="2" height="4" fill="#dcdcdc"/><rect x="11" y="14" width="2" height="4" fill="#dcdcdc"/></svg>
<svg class="a" style="left:194px;top:668.5px;" width="20" height="20" viewBox="0 0 20 20"><path d="M5 1V12M9 1V14M1 5H13M1 9H13M13 7V19M16 9V19M3 18L17 3" stroke="#dcdcdc" stroke-width="1.2"/></svg>
<svg class="a" style="left:235px;top:668.5px;" width="20" height="20" viewBox="0 0 20 20"><circle cx="10" cy="10" r="8" fill="#dcdcdc"/><circle cx="8.6" cy="8.6" r="6.8" fill="#46607c"/><circle cx="10" cy="10" r="8" fill="none" stroke="#dcdcdc" stroke-width="1.5"/></svg>
<svg class="a" style="left:276px;top:668.5px;" width="20" height="20" viewBox="0 0 20 20"><circle cx="8" cy="3" r="2.5" fill="#dcdcdc"/><path d="M10 8L18 13L10 18L2 13Z M6 10.5L14 15.5M14 10.5L6 15.5" fill="none" stroke="#dcdcdc" stroke-width="1.3"/></svg>
<svg class="a" style="left:317px;top:668.5px;" width="20" height="20" viewBox="0 0 20 20"><circle cx="8" cy="8" r="5.5" fill="none" stroke="#dcdcdc" stroke-width="1.4"/><path d="M12 12L17 17" stroke="#dcdcdc" stroke-width="1.8"/></svg>
<svg class="a" style="left:358px;top:668.5px;" width="20" height="20" viewBox="0 0 20 20"><rect x="7.5" y="7.5" width="5" height="5" fill="none" stroke="#dcdcdc" stroke-width="1.3"/><circle cx="10" cy="2.5" r="2" fill="#dcdcdc"/><circle cx="10" cy="17.5" r="2" fill="#dcdcdc"/><circle cx="2.5" cy="10" r="2" fill="#dcdcdc"/><circle cx="17.5" cy="10" r="2" fill="#dcdcdc"/><path d="M10 4.5V7.5M10 12.5V15.5M4.5 10H7.5M12.5 10H15.5" stroke="#dcdcdc" stroke-width="1.3"/></svg>
<svg class="a" style="left:399px;top:668.5px;" width="20" height="20" viewBox="0 0 20 20"><rect x="2" y="1" width="11" height="10" rx="1" fill="#dcdcdc"/><path d="M13 4L18 1V10L13 7Z" fill="#dcdcdc"/><path d="M5 15C8 11 15 11 18 15C15 19 8 19 5 15Z" fill="#dcdcdc"/><circle cx="11.5" cy="15" r="2" fill="#565656"/></svg>
<div class="a" style="left:716px;top:391px;width:256px;height:304px;background:rgba(20,19,19,0.9);border-radius:5px;"></div>
<div class="a" style="left:723px;top:400.5px;width:20px;height:1.3px;background:#6a6a6a;"></div>
<div class="a" style="left:723px;top:405.5px;width:20px;height:1.3px;background:#6a6a6a;"></div>
<svg class="a" style="left:752px;top:399px;" width="11" height="9" viewBox="0 0 11 9"><path d="M0 0H11L5.5 9Z" fill="#8a8a8a"/></svg>
<svg class="a" style="left:772px;top:396px;" width="18" height="18" viewBox="0 0 18 18"><circle cx="9" cy="9" r="7.8" fill="none" stroke="#c4c4c4" stroke-width="1.5"/><path d="M13 5L10 10L5 13L8 8Z" fill="#c4c4c4"/><path d="M5 13L13 5" stroke="#c4c4c4" stroke-width="0.8"/></svg>
<div class="a t" style="left:795px;top:395.76px;font-size:18.6px;color:#b4b4b4;">AI Navigation</div>
<svg class="a" style="left:727px;top:425.5px;" width="10" height="9" viewBox="0 0 10 9"><path d="M0 0H10L5 9Z" fill="#8a8a8a"/></svg>
<div class="a t" style="left:745px;top:421.38px;font-size:15.5px;color:#d0d0d0;">Surfaces</div>
<div class="a t" style="left:744px;top:445.58px;font-size:15.5px;color:#d0d0d0;">Show Only Selected</div>
<div class="a" style="left:946px;top:444.7px;width:17px;height:16px;background:#2b2b2b;border-radius:2px;"></div>
<div class="a t" style="left:744px;top:465.58px;font-size:15.5px;color:#d0d0d0;">Show NavMesh</div>
<div class="a" style="left:946px;top:464.7px;width:17px;height:16px;background:#2b2b2b;border-radius:2px;"></div>
<svg class="a" style="left:948px;top:466.7px;" width="13" height="12" viewBox="0 0 13 12"><path d="M1.5 6.5L5 10L11.5 2.5" fill="none" stroke="#f0f0f0" stroke-width="2"/></svg>
<div class="a t" style="left:744px;top:485.58px;font-size:15.5px;color:#d0d0d0;">Show HeightMesh</div>
<div class="a" style="left:946px;top:484.7px;width:17px;height:16px;background:#2b2b2b;border-radius:2px;"></div>
<svg class="a" style="left:727px;top:516.5px;" width="10" height="9" viewBox="0 0 10 9"><path d="M0 0H10L5 9Z" fill="#8a8a8a"/></svg>
<div class="a t" style="left:745px;top:512.38px;font-size:15.5px;color:#d0d0d0;">Agents</div>
<div class="a t" style="left:744px;top:536.38px;font-size:15.5px;color:#d0d0d0;">Show Path Polygons</div>
<div class="a" style="left:946px;top:535.5px;width:17px;height:16px;background:#2b2b2b;border-radius:2px;"></div>
<svg class="a" style="left:948px;top:537.5px;" width="13" height="12" viewBox="0 0 13 12"><path d="M1.5 6.5L5 10L11.5 2.5" fill="none" stroke="#f0f0f0" stroke-width="2"/></svg>
<div class="a t" style="left:744px;top:556.38px;font-size:15.5px;color:#d0d0d0;">Show Path Query Nodes</div>
<div class="a" style="left:946px;top:555.5px;width:17px;height:16px;background:#2b2b2b;border-radius:2px;"></div>
<div class="a t" style="left:744px;top:576.38px;font-size:15.5px;color:#d0d0d0;">Show Neighbours</div>
<div class="a" style="left:946px;top:575.5px;width:17px;height:16px;background:#2b2b2b;border-radius:2px;"></div>
<div class="a t" style="left:744px;top:596.38px;font-size:15.5px;color:#d0d0d0;">Show Walls</div>
<div class="a" style="left:946px;top:595.5px;width:17px;height:16px;background:#2b2b2b;border-radius:2px;"></div>
<div class="a t" style="left:744px;top:616.38px;font-size:15.5px;color:#d0d0d0;">Show Avoidance</div>
<div class="a" style="left:946px;top:615.5px;width:17px;height:16px;background:#2b2b2b;border-radius:2px;"></div>
<svg class="a" style="left:727px;top:647.5px;" width="10" height="9" viewBox="0 0 10 9"><path d="M0 0H10L5 9Z" fill="#8a8a8a"/></svg>
<div class="a t" style="left:745px;top:643.38px;font-size:15.5px;color:#d0d0d0;">Obstacles</div>
<div class="a t" style="left:744px;top:667.38px;font-size:15.5px;color:#d0d0d0;">Show Carve Hull</div>
<div class="a" style="left:946px;top:666.5px;width:17px;height:16px;background:#2b2b2b;border-radius:2px;"></div>
<div class="a" style="left:975px;top:99px;width:2px;height:599px;background:#131313;"></div>
<svg class="a" style="left:10px;top:709px;" width="13" height="14" viewBox="0 0 13 14"><rect x="0.7" y="0.7" width="11.6" height="12.6" fill="none" stroke="#c4c4c4" stroke-width="1.4"/><path d="M3 4H10M3 7H10M3 10H10" stroke="#c4c4c4" stroke-width="1.4"/></svg>
<div class="a t" style="left:28px;top:708.28px;font-size:15.5px;color:#c4c4c4;">Console</div>
<div class="a" style="left:106px;top:700px;width:94px;height:30px;background:#383838;border-radius:5px 5px 0 0;"></div>
<svg class="a" style="left:116px;top:710px;" width="19" height="12" viewBox="0 0 19 12"><path d="M4 1H15A4 4 0 0 1 19 5V7A4 4 0 0 1 15 11H4A4 4 0 0 1 0 7V5A4 4 0 0 1 4 1Z" fill="#c4c4c4"/><path d="M3 6H8M5.5 3.5V8.5" stroke="#383838" stroke-width="1.4"/><circle cx="13" cy="4.5" r="1.2" fill="#383838"/><circle cx="15.5" cy="7" r="1.2" fill="#383838"/></svg>
<div class="a t" style="left:138px;top:708.28px;font-size:15.5px;color:#c4c4c4;">Game</div>
<svg class="a" style="left:951px;top:707px;" width="6" height="16" viewBox="0 0 6 16"><circle cx="3" cy="3" r="1.5" fill="#c4c4c4"/><circle cx="3" cy="8" r="1.5" fill="#c4c4c4"/><circle cx="3" cy="13" r="1.5" fill="#c4c4c4"/></svg>
<div class="a" style="left:0px;top:730px;width:971px;height:26px;background:#3c3c3c;"></div>
<div class="a" style="left:0px;top:755px;width:971px;height:1px;background:#1e1e1e;"></div>
<div class="a" style="left:110px;top:731px;width:1px;height:24px;background:#2a2a2a;"></div>
<div class="a" style="left:217px;top:731px;width:1px;height:24px;background:#2a2a2a;"></div>
<div class="a" style="left:417px;top:731px;width:1px;height:24px;background:#2a2a2a;"></div>
<div class="a" style="left:598px;top:731px;width:1px;height:24px;background:#2a2a2a;"></div>
<div class="a" style="left:736px;top:731px;width:1px;height:24px;background:#2a2a2a;"></div>
<div class="a" style="left:768px;top:731px;width:1px;height:24px;background:#2a2a2a;"></div>
<div class="a" style="left:801px;top:731px;width:1px;height:24px;background:#2a2a2a;"></div>
<div class="a" style="left:834px;top:731px;width:1px;height:24px;background:#2a2a2a;"></div>
<div class="a" style="left:883px;top:731px;width:1px;height:24px;background:#2a2a2a;"></div>
<div class="a t" style="left:2px;top:734.88px;font-size:15.5px;color:#c4c4c4;">Game</div>
<svg class="a" style="left:94.5px;top:739.5px;" width="9" height="6" viewBox="0 0 9 6"><path d="M0 0H9L4.5 6Z" fill="#c4c4c4"/></svg>
<div class="a t" style="left:122px;top:734.88px;font-size:15.5px;color:#c4c4c4;">Display 1</div>
<svg class="a" style="left:202.0px;top:739.5px;" width="9" height="6" viewBox="0 0 9 6"><path d="M0 0H9L4.5 6Z" fill="#c4c4c4"/></svg>
<div class="a t" style="left:222px;top:734.88px;font-size:15.5px;color:#c4c4c4;">Free Aspect</div>
<svg class="a" style="left:402.0px;top:739.5px;" width="9" height="6" viewBox="0 0 9 6"><path d="M0 0H9L4.5 6Z" fill="#c4c4c4"/></svg>
<div class="a t" style="left:426px;top:734.88px;font-size:15.5px;color:#c4c4c4;">Scale</div>
<div class="a" style="left:478px;top:742px;width:62px;height:2px;background:#5e5e5e;border-radius:1px;"></div>
<svg class="a" style="left:472px;top:737px;" width="12" height="12" viewBox="0 0 12 12"><circle cx="6" cy="6" r="5.8" fill="#9a9a9a"/></svg>
<div class="a t" style="left:547px;top:734.88px;font-size:15.5px;color:#c4c4c4;">1.3x</div>
<div class="a t" style="left:603px;top:734.88px;font-size:15.5px;color:#c4c4c4;">Play Focused</div>
<svg class="a" style="left:720.5px;top:739.5px;" width="9" height="6" viewBox="0 0 9 6"><path d="M0 0H9L4.5 6Z" fill="#c4c4c4"/></svg>
<svg class="a" style="left:744px;top:734px;" width="18" height="18" viewBox="0 0 18 18"><ellipse cx="9" cy="10.5" rx="5" ry="6.5" fill="#c4c4c4"/><circle cx="9" cy="4" r="2.8" fill="#c4c4c4"/><path d="M2 6L6 8.5M16 6L12 8.5M1 11H5M17 11H13M2 16L6 13.5M16 16L12 13.5" stroke="#c4c4c4" stroke-width="1.4"/></svg>
<svg class="a" style="left:776px;top:735px;" width="16" height="15" viewBox="0 0 16 15"><path d="M1 5H4L8 2V13L4 10H1Z" fill="#c4c4c4"/><path d="M10 5Q11.5 7.5 10 10M12.5 3Q15 7.5 12.5 12" fill="none" stroke="#c4c4c4" stroke-width="1.3"/></svg>
<svg class="a" style="left:808px;top:735px;" width="18" height="14" viewBox="0 0 18 14"><rect x="0.7" y="0.7" width="16.6" height="12.6" fill="none" stroke="#c4c4c4" stroke-width="1.4"/><path d="M3 4.5H15M3 7.5H15M3 10.5H15M5 3V9M8 3V9M11 3V9M14 3V9" stroke="#c4c4c4" stroke-width="1.1"/></svg>
<div class="a t" style="left:840px;top:734.88px;font-size:15.5px;color:#c4c4c4;">Stats</div>
<div class="a t" style="left:888px;top:734.88px;font-size:15.5px;color:#c4c4c4;">Gizmos</div>
<div class="a" style="left:948px;top:734px;width:1px;height:17px;background:#2a2a2a;"></div>
<svg class="a" style="left:955.5px;top:739.5px;" width="9" height="6" viewBox="0 0 9 6"><path d="M0 0H9L4.5 6Z" fill="#c4c4c4"/></svg>
<div class="a" style="left:0;top:756px;width:971px;height:356px;background:linear-gradient(180deg,#9aa4b5 0px,#a3aec3 64px,#b3c3da 124px,#c5d8ea 150px,#d3e4ee 161px,#dcecec 168px,#eeeeee 178px,#e0eceb 182px,#cdd5d4 187px,#b7bcbc 192.5px,#a5a5a6 196px,#a09e9e 220px,#a7a4a3 355px);"></div>
<div class="a" style="left:0px;top:756.5px;width:971px;height:1.2px;background:#7d9fd0;"></div>
<div class="a" style="left:969.5px;top:756px;width:1.5px;height:356px;background:#8c97a8;"></div>
<div class="a" style="left:751.5px;top:778.5px;width:196px;height:34px;background:#f3f3f3;border-radius:3px;border:1px solid #8c8c8c;"></div>
<div class="a" style="left:751.5px;top:818.8px;width:196px;height:34px;background:#f3f3f3;border-radius:3px;border:1px solid #8c8c8c;"></div>
<div class="a t" style="left:784px;top:781.17px;font-size:29.8px;color:#262626;">Start Host</div>
<div class="a t" style="left:776px;top:820.97px;font-size:29.8px;color:#262626;">Start Client</div>
<div class="a" style="left:484px;top:967px;width:2px;height:2px;background:#c0bdbb;border-radius:1px;"></div>
<svg class="a" style="left:0px;top:1119px;" width="17" height="17" viewBox="0 0 17 17"><path d="M8.5 1A7.5 7 0 1 1 5 14.5L1.5 16L3 12.5A7.5 7 0 0 1 8.5 1Z" fill="#e6e6e6"/><path d="M8.5 4V10" stroke="#131313" stroke-width="2.2"/><circle cx="8.5" cy="12.5" r="1.2" fill="#131313"/></svg>
<div class="a t" style="left:23px;top:1118.71px;font-size:15.7px;color:#c4c4c4;">[Player(Clone)] FIRE pressed | OwnerClientId=0</div>
<div class="a" style="left:977px;top:99px;width:120px;height:31px;background:#383838;border-radius:5px 5px 0 0;"></div>
<svg class="a" style="left:989px;top:108px;" width="15" height="13" viewBox="0 0 15 13"><path d="M0.5 2L3 0V4Z" fill="#c4c4c4"/><path d="M5 1.5H15M5 6.5H15M5 11.5H15" stroke="#c4c4c4" stroke-width="1.5"/><rect x="2" y="5.5" width="2" height="2" fill="#c4c4c4"/><rect x="2" y="10.5" width="2" height="2" fill="#c4c4c4"/></svg>
<div class="a t" style="left:1009px;top:107.28px;font-size:15.5px;color:#c4c4c4;">Hierarchy</div>
<svg class="a" style="left:1418px;top:108px;" width="12" height="14" viewBox="0 0 12 14"><path d="M3 6V3.5a2.5 2.5 0 0 1 5 0" fill="none" stroke="#c4c4c4" stroke-width="1.4"/><rect x="1" y="6.5" width="10" height="6.5" fill="none" stroke="#c4c4c4" stroke-width="1.4"/></svg>
<svg class="a" style="left:1442px;top:106px;" width="6" height="16" viewBox="0 0 6 16"><circle cx="3" cy="3" r="1.5" fill="#c4c4c4"/><circle cx="3" cy="8" r="1.5" fill="#c4c4c4"/><circle cx="3" cy="13" r="1.5" fill="#c4c4c4"/></svg>
<div class="a" style="left:977px;top:129px;width:485px;height:569px;background:#383838;"></div>
<svg class="a" style="left:984px;top:134px;" width="16" height="16" viewBox="0 0 16 16"><path d="M8 1V15M1 8H15" stroke="#d0d0d0" stroke-width="1.6"/></svg>
<svg class="a" style="left:1005.0px;top:138.5px;" width="9" height="6" viewBox="0 0 9 6"><path d="M0 0H9L4.5 6Z" fill="#c4c4c4"/></svg>
<div class="a" style="left:1052px;top:132px;width:405px;height:20px;background:#2a2a2a;border-radius:5px;"></div>
<svg class="a" style="left:1057px;top:136px;" width="13" height="12" viewBox="0 0 13 12"><circle cx="4.5" cy="4.5" r="3.2" fill="none" stroke="#c4c4c4" stroke-width="1.4"/><path d="M7 7L10 10.5" stroke="#c4c4c4" stroke-width="1.6"/><path d="M9 3.5H13L11 5.5Z" fill="#c4c4c4"/></svg>
<div class="a t" style="left:1074px;top:134.38px;font-size:15.5px;color:#777777;">All</div>
<div class="a" style="left:1437px;top:132px;width:20px;height:20px;background:#333333;border-radius:0 5px 5px 0;"></div>
<svg class="a" style="left:1439px;top:134px;" width="16" height="16" viewBox="0 0 16 16"><rect x="4.5" y="1.5" width="10" height="10" rx="1" fill="none" stroke="#b0b0b0" stroke-width="1.2"/><rect x="1.5" y="10" width="4" height="4" fill="none" stroke="#b0b0b0" stroke-width="1.2"/><path d="M5.5 10.5L12 4M8.5 4H12V7.5" fill="none" stroke="#b0b0b0" stroke-width="1.2"/></svg>
<div class="a" style="left:977px;top:154px;width:485px;height:20px;background:#2c2c2c;"></div>
<div class="a" style="left:977px;top:174px;width:40px;height:524px;background:#333333;"></div>
<svg class="a" style="left:1020px;top:159px;" width="10" height="9" viewBox="0 0 10 9"><path d="M0 0H10L5 9Z" fill="#8a8a8a"/></svg>
<svg class="a" style="left:1035px;top:155px;" width="18" height="18" viewBox="0 0 18 18"><g fill="none" stroke="#e6e6e6" stroke-width="2.4" stroke-linejoin="round"><path d="M9 2L16 6V12L9 16L2 12V6Z"/><path d="M9 9V16M9 9L2 6M9 9L16 6"/></g></svg>
<div class="a t" style="left:1058px;top:156.88px;font-size:15.5px;color:#e0e0e0;font-weight:bold;">Main*</div>
<svg class="a" style="left:1443px;top:156px;" width="6" height="16" viewBox="0 0 6 16"><circle cx="3" cy="3" r="1.5" fill="#c4c4c4"/><circle cx="3" cy="8" r="1.5" fill="#c4c4c4"/><circle cx="3" cy="13" r="1.5" fill="#c4c4c4"/></svg>
<svg class="a" style="left:1053.0px;top:176px;" width="17" height="17" viewBox="0 0 17 17"><g fill="none" stroke="#c4c4c4" stroke-width="1.3" stroke-linejoin="round"><path d="M8.5 1.02L15.64 4.760000000000001V12.24L8.5 15.979999999999999L1.36 12.24V4.760000000000001Z"/><path d="M1.36 4.760000000000001L8.5 8.5L15.64 4.760000000000001M8.5 8.5V15.979999999999999"/></g></svg>
<div class="a t" style="left:1074.0px;top:176.88px;font-size:15.5px;color:#d2d2d2;">Main Camera</div>
<svg class="a" style="left:1053.0px;top:196px;" width="17" height="17" viewBox="0 0 17 17"><g fill="none" stroke="#c4c4c4" stroke-width="1.3" stroke-linejoin="round"><path d="M8.5 1.02L15.64 4.760000000000001V12.24L8.5 15.979999999999999L1.36 12.24V4.760000000000001Z"/><path d="M1.36 4.760000000000001L8.5 8.5L15.64 4.760000000000001M8.5 8.5V15.979999999999999"/></g></svg>
<div class="a t" style="left:1074.0px;top:196.88px;font-size:15.5px;color:#d2d2d2;">Directional Light</div>
<svg class="a" style="left:1053.0px;top:216px;" width="17" height="17" viewBox="0 0 17 17"><g fill="none" stroke="#c4c4c4" stroke-width="1.3" stroke-linejoin="round"><path d="M8.5 1.02L15.64 4.760000000000001V12.24L8.5 15.979999999999999L1.36 12.24V4.760000000000001Z"/><path d="M1.36 4.760000000000001L8.5 8.5L15.64 4.760000000000001M8.5 8.5V15.979999999999999"/></g></svg>
<div class="a t" style="left:1074.0px;top:216.88px;font-size:15.5px;color:#d2d2d2;">NetworkManager</div>
<svg class="a" style="left:1037.0px;top:240px;" width="10" height="9" viewBox="0 0 10 9"><path d="M0 0H10L5 9Z" fill="#8a8a8a"/></svg>
<svg class="a" style="left:1053.0px;top:236px;" width="17" height="17" viewBox="0 0 17 17"><g fill="none" stroke="#c4c4c4" stroke-width="1.3" stroke-linejoin="round"><path d="M8.5 1.02L15.64 4.760000000000001V12.24L8.5 15.979999999999999L1.36 12.24V4.760000000000001Z"/><path d="M1.36 4.760000000000001L8.5 8.5L15.64 4.760000000000001M8.5 8.5V15.979999999999999"/></g></svg>
<div class="a t" style="left:1074.0px;top:236.88px;font-size:15.5px;color:#d2d2d2;">ConnectPanel</div>
<svg class="a" style="left:1070.5px;top:256px;" width="17" height="17" viewBox="0 0 17 17"><g fill="none" stroke="#c4c4c4" stroke-width="1.3" stroke-linejoin="round"><path d="M8.5 1.02L15.64 4.760000000000001V12.24L8.5 15.979999999999999L1.36 12.24V4.760000000000001Z"/><path d="M1.36 4.760000000000001L8.5 8.5L15.64 4.760000000000001M8.5 8.5V15.979999999999999"/></g></svg>
<div class="a t" style="left:1091.5px;top:256.88px;font-size:15.5px;color:#d2d2d2;">NetworkUI</div>
<svg class="a" style="left:1054.5px;top:280px;" width="10" height="9" viewBox="0 0 10 9"><path d="M0 0H10L5 9Z" fill="#8a8a8a"/></svg>
<svg class="a" style="left:1070.5px;top:276px;" width="17" height="17" viewBox="0 0 17 17"><g fill="none" stroke="#c4c4c4" stroke-width="1.3" stroke-linejoin="round"><path d="M8.5 1.02L15.64 4.760000000000001V12.24L8.5 15.979999999999999L1.36 12.24V4.760000000000001Z"/><path d="M1.36 4.760000000000001L8.5 8.5L15.64 4.760000000000001M8.5 8.5V15.979999999999999"/></g></svg>
<div class="a t" style="left:1091.5px;top:276.88px;font-size:15.5px;color:#d2d2d2;">Panel</div>
<svg class="a" style="left:1073.0px;top:299px;" width="8" height="10" viewBox="0 0 8 10"><path d="M0 0L8 5L0 10Z" fill="#8a8a8a"/></svg>
<svg class="a" style="left:1088.0px;top:296px;" width="17" height="17" viewBox="0 0 17 17"><g fill="none" stroke="#c4c4c4" stroke-width="1.3" stroke-linejoin="round"><path d="M8.5 1.02L15.64 4.760000000000001V12.24L8.5 15.979999999999999L1.36 12.24V4.760000000000001Z"/><path d="M1.36 4.760000000000001L8.5 8.5L15.64 4.760000000000001M8.5 8.5V15.979999999999999"/></g></svg>
<div class="a t" style="left:1109.0px;top:296.88px;font-size:15.5px;color:#d2d2d2;">ClientButton</div>
<svg class="a" style="left:1073.0px;top:319px;" width="8" height="10" viewBox="0 0 8 10"><path d="M0 0L8 5L0 10Z" fill="#8a8a8a"/></svg>
<svg class="a" style="left:1088.0px;top:316px;" width="17" height="17" viewBox="0 0 17 17"><g fill="none" stroke="#c4c4c4" stroke-width="1.3" stroke-linejoin="round"><path d="M8.5 1.02L15.64 4.760000000000001V12.24L8.5 15.979999999999999L1.36 12.24V4.760000000000001Z"/><path d="M1.36 4.760000000000001L8.5 8.5L15.64 4.760000000000001M8.5 8.5V15.979999999999999"/></g></svg>
<div class="a t" style="left:1109.0px;top:316.88px;font-size:15.5px;color:#d2d2d2;">HostButton</div>
<svg class="a" style="left:1053.0px;top:336px;" width="17" height="17" viewBox="0 0 17 17"><g fill="none" stroke="#c4c4c4" stroke-width="1.3" stroke-linejoin="round"><path d="M8.5 1.02L15.64 4.760000000000001V12.24L8.5 15.979999999999999L1.36 12.24V4.760000000000001Z"/><path d="M1.36 4.760000000000001L8.5 8.5L15.64 4.760000000000001M8.5 8.5V15.979999999999999"/></g></svg>
<div class="a t" style="left:1074.0px;top:336.88px;font-size:15.5px;color:#d2d2d2;">EventSystem</div>
<div class="a" style="left:977px;top:355px;width:485px;height:19px;background:#4a4a4a;"></div>
<svg class="a" style="left:1053.0px;top:356px;" width="17" height="17" viewBox="0 0 17 17"><g fill="none" stroke="#c4c4c4" stroke-width="1.3" stroke-linejoin="round"><path d="M8.5 1.02L15.64 4.760000000000001V12.24L8.5 15.979999999999999L1.36 12.24V4.760000000000001Z"/><path d="M1.36 4.760000000000001L8.5 8.5L15.64 4.760000000000001M8.5 8.5V15.979999999999999"/></g></svg>
<div class="a t" style="left:1074.0px;top:356.88px;font-size:15.5px;color:#d2d2d2;">Bullet</div>
<div class="a" style="left:973px;top:698px;width:2px;height:2px;background:#131313;"></div>
<div class="a" style="left:973px;top:700px;width:102px;height:30px;background:#383838;border-radius:5px 5px 0 0;"></div>
<svg class="a" style="left:985px;top:708px;" width="15" height="13" viewBox="0 0 15 13"><path d="M0 1.5Q0 0 1.5 0H6L8 2H13.5Q15 2 15 3.5V11.5Q15 13 13.5 13H1.5Q0 13 0 11.5Z" fill="#c4c4c4"/></svg>
<div class="a t" style="left:1005px;top:708.28px;font-size:15.5px;color:#c4c4c4;">Project</div>
<svg class="a" style="left:1418px;top:709px;" width="12" height="14" viewBox="0 0 12 14"><path d="M3 6V3.5a2.5 2.5 0 0 1 5 0" fill="none" stroke="#c4c4c4" stroke-width="1.4"/><rect x="1" y="6.5" width="10" height="6.5" fill="none" stroke="#c4c4c4" stroke-width="1.4"/></svg>
<svg class="a" style="left:1441px;top:707px;" width="6" height="16" viewBox="0 0 6 16"><circle cx="3" cy="3" r="1.5" fill="#c4c4c4"/><circle cx="3" cy="8" r="1.5" fill="#c4c4c4"/><circle cx="3" cy="13" r="1.5" fill="#c4c4c4"/></svg>
<div class="a" style="left:973px;top:730px;width:489px;height:382px;background:#383838;"></div>
<div class="a" style="left:973px;top:755px;width:489px;height:1px;background:#262626;"></div>
<svg class="a" style="left:981px;top:735px;" width="16" height="16" viewBox="0 0 16 16"><path d="M8 1V15M1 8H15" stroke="#d0d0d0" stroke-width="1.6"/></svg>
<svg class="a" style="left:1002.0px;top:739.5px;" width="9" height="6" viewBox="0 0 9 6"><path d="M0 0H9L4.5 6Z" fill="#c4c4c4"/></svg>
<div class="a" style="left:1029px;top:733px;width:247px;height:20px;background:#2a2a2a;border-radius:5px;"></div>
<svg class="a" style="left:1034px;top:737px;" width="12" height="12" viewBox="0 0 12 12"><circle cx="4.5" cy="4.5" r="3.2" fill="none" stroke="#c4c4c4" stroke-width="1.4"/><path d="M7 7L10.5 10.5" stroke="#c4c4c4" stroke-width="1.6"/></svg>
<div class="a" style="left:1255px;top:733px;width:21px;height:20px;background:#333333;border-radius:0 5px 5px 0;"></div>
<svg class="a" style="left:1257px;top:735px;" width="16" height="16" viewBox="0 0 16 16"><rect x="4.5" y="1.5" width="10" height="10" rx="1" fill="none" stroke="#b0b0b0" stroke-width="1.2"/><rect x="1.5" y="10" width="4" height="4" fill="none" stroke="#b0b0b0" stroke-width="1.2"/><path d="M5.5 10.5L12 4M8.5 4H12V7.5" fill="none" stroke="#b0b0b0" stroke-width="1.2"/></svg>
<div class="a" style="left:1279px;top:731px;width:1px;height:24px;background:#2c2c2c;"></div>
<div class="a" style="left:1312px;top:731px;width:1px;height:24px;background:#2c2c2c;"></div>
<div class="a" style="left:1344px;top:731px;width:1px;height:24px;background:#2c2c2c;"></div>
<div class="a" style="left:1377px;top:731px;width:1px;height:24px;background:#2c2c2c;"></div>
<div class="a" style="left:1409px;top:731px;width:1px;height:24px;background:#2c2c2c;"></div>
<svg class="a" style="left:1287px;top:734px;" width="18" height="17" viewBox="0 0 18 17"><rect x="2" y="0.5" width="7" height="7" fill="#c4c4c4"/><circle cx="5" cy="12" r="4.5" fill="#c4c4c4"/><path d="M12 4L16 11H8Z" fill="#c4c4c4"/></svg>
<svg class="a" style="left:1318px;top:734px;" width="18" height="17" viewBox="0 0 18 17"><path d="M8 1H16V9L8 17L0 9Z" fill="#c4c4c4" transform="rotate(0)"/><circle cx="12.5" cy="4.5" r="1.6" fill="#383838"/></svg>
<svg class="a" style="left:1350px;top:734px;" width="18" height="18" viewBox="0 0 18 18"><circle cx="9" cy="9" r="8.5" fill="#c4c4c4"/><rect x="7.7" y="3.5" width="2.6" height="7" fill="#383838"/><circle cx="9" cy="13.5" r="1.5" fill="#383838"/></svg>
<svg class="a" style="left:1383px;top:734px;" width="18" height="17" viewBox="0 0 18 17"><path d="M9 1L11.4 6.2L17 6.8L12.8 10.6L14 16.2L9 13.4L4 16.2L5.2 10.6L1 6.8L6.6 6.2Z" fill="#9a9a9a"/></svg>
<svg class="a" style="left:1416px;top:736px;" width="20" height="13" viewBox="0 0 20 13"><path d="M1 6.5C5 0 15 0 19 6.5C15 13 5 13 1 6.5Z" fill="none" stroke="#8a8a8a" stroke-width="1.5"/><circle cx="10" cy="6.5" r="3" fill="#8a8a8a"/></svg>
<div class="a t" style="left:1437px;top:734.88px;font-size:15.5px;color:#c4c4c4;">26</div>
<div class="a" style="left:1229px;top:756px;width:1px;height:356px;background:#262626;"></div>
<svg class="a" style="left:979px;top:761px;" width="10" height="9" viewBox="0 0 10 9"><path d="M0 0H10L5 9Z" fill="#8a8a8a"/></svg>
<svg class="a" style="left:995px;top:757px;" width="17" height="16" viewBox="0 0 17 16"><path d="M8.5 1L10.5 6H16L11.5 9.5L13.3 15L8.5 11.6L3.7 15L5.5 9.5L1 6H6.5Z" fill="#c4c4c4"/></svg>
<div class="a t" style="left:1017px;top:757.88px;font-size:15.5px;color:#d8d8d8;font-weight:bold;">Favorites</div>
<svg class="a" style="left:1012px;top:777px;" width="17" height="17" viewBox="0 0 17 17"><circle cx="7" cy="7" r="5.3" fill="none" stroke="#c4c4c4" stroke-width="1.5"/><path d="M11 11L16 16" stroke="#c4c4c4" stroke-width="1.8"/></svg>
<div class="a t" style="left:1033px;top:777.88px;font-size:15.5px;color:#d2d2d2;">All Materials</div>
<svg class="a" style="left:1012px;top:797px;" width="17" height="17" viewBox="0 0 17 17"><circle cx="7" cy="7" r="5.3" fill="none" stroke="#c4c4c4" stroke-width="1.5"/><path d="M11 11L16 16" stroke="#c4c4c4" stroke-width="1.8"/></svg>
<div class="a t" style="left:1033px;top:797.88px;font-size:15.5px;color:#d2d2d2;">All Models</div>
<svg class="a" style="left:1012px;top:817px;" width="17" height="17" viewBox="0 0 17 17"><circle cx="7" cy="7" r="5.3" fill="none" stroke="#c4c4c4" stroke-width="1.5"/><path d="M11 11L16 16" stroke="#c4c4c4" stroke-width="1.8"/></svg>
<div class="a t" style="left:1033px;top:817.88px;font-size:15.5px;color:#d2d2d2;">All Prefabs</div>
<div class="a" style="left:973px;top:855px;width:256px;height:20px;background:#4a4a4a;"></div>
<svg class="a" style="left:979px;top:861px;" width="10" height="9" viewBox="0 0 10 9"><path d="M0 0H10L5 9Z" fill="#8a8a8a"/></svg>
<svg class="a" style="left:995px;top:858px;" width="17" height="14" viewBox="0 0 17 14"><path d="M0 1.5Q0 0 1.5 0H6L8 2H14Q15 2 15 3.5V5H4L0 13Z" fill="#c4c4c4"/><path d="M4 6H17L13 14H0Z" fill="#c4c4c4"/></svg>
<div class="a t" style="left:1017px;top:856.88px;font-size:15.5px;color:#e0e0e0;font-weight:bold;">Assets</div>
<svg class="a" style="left:1012px;top:878px;" width="15" height="13" viewBox="0 0 15 13"><path d="M0 1.5Q0 0 1.5 0H6L8 2H13.5Q15 2 15 3.5V11.5Q15 13 13.5 13H1.5Q0 13 0 11.5Z" fill="#c4c4c4"/></svg>
<div class="a t" style="left:1033px;top:876.88px;font-size:15.5px;color:#d2d2d2;">Material</div>
<svg class="a" style="left:1012px;top:898px;" width="15" height="13" viewBox="0 0 15 13"><path d="M0 1.5Q0 0 1.5 0H6L8 2H13.5Q15 2 15 3.5V11.5Q15 13 13.5 13H1.5Q0 13 0 11.5Z" fill="#c4c4c4"/></svg>
<div class="a t" style="left:1033px;top:896.88px;font-size:15.5px;color:#d2d2d2;">Prefabs</div>
<svg class="a" style="left:1012px;top:918px;" width="15" height="13" viewBox="0 0 15 13"><path d="M0 1.5Q0 0 1.5 0H6L8 2H13.5Q15 2 15 3.5V11.5Q15 13 13.5 13H1.5Q0 13 0 11.5Z" fill="#c4c4c4"/></svg>
<div class="a t" style="left:1033px;top:916.88px;font-size:15.5px;color:#d2d2d2;">Scenes</div>
<svg class="a" style="left:1012px;top:938px;" width="15" height="13" viewBox="0 0 15 13"><path d="M0 1.5Q0 0 1.5 0H6L8 2H13.5Q15 2 15 3.5V11.5Q15 13 13.5 13H1.5Q0 13 0 11.5Z" fill="#c4c4c4"/></svg>
<div class="a t" style="left:1033px;top:936.88px;font-size:15.5px;color:#d2d2d2;">Scripts</div>
<svg class="a" style="left:1012px;top:958px;" width="15" height="13" viewBox="0 0 15 13"><path d="M0 1.5Q0 0 1.5 0H6L8 2H13.5Q15 2 15 3.5V11.5Q15 13 13.5 13H1.5Q0 13 0 11.5Z" fill="#c4c4c4"/></svg>
<div class="a t" style="left:1033px;top:956.88px;font-size:15.5px;color:#d2d2d2;">Settings</div>
<svg class="a" style="left:997px;top:980px;" width="8" height="10" viewBox="0 0 8 10"><path d="M0 0L8 5L0 10Z" fill="#8a8a8a"/></svg>
<svg class="a" style="left:1012px;top:978px;" width="15" height="13" viewBox="0 0 15 13"><path d="M0 1.5Q0 0 1.5 0H6L8 2H13.5Q15 2 15 3.5V11.5Q15 13 13.5 13H1.5Q0 13 0 11.5Z" fill="#c4c4c4"/></svg>
<div class="a t" style="left:1033px;top:976.88px;font-size:15.5px;color:#d2d2d2;">TextMesh Pro</div>
<svg class="a" style="left:997px;top:1000px;" width="8" height="10" viewBox="0 0 8 10"><path d="M0 0L8 5L0 10Z" fill="#8a8a8a"/></svg>
<svg class="a" style="left:1012px;top:998px;" width="15" height="13" viewBox="0 0 15 13"><path d="M0 1.5Q0 0 1.5 0H6L8 2H13.5Q15 2 15 3.5V11.5Q15 13 13.5 13H1.5Q0 13 0 11.5Z" fill="#c4c4c4"/></svg>
<div class="a t" style="left:1033px;top:996.88px;font-size:15.5px;color:#d2d2d2;">TutorialInfo</div>
<svg class="a" style="left:980px;top:1020px;" width="8" height="10" viewBox="0 0 8 10"><path d="M0 0L8 5L0 10Z" fill="#8a8a8a"/></svg>
<svg class="a" style="left:995px;top:1019px;" width="17" height="14" viewBox="0 0 17 14"><path d="M0 1.5Q0 0 1.5 0H6L8 2H15.5Q17 2 17 3.5V12.5Q17 14 15.5 14H1.5Q0 14 0 12.5Z" fill="#c4c4c4"/></svg>
<div class="a t" style="left:1017px;top:1016.88px;font-size:15.5px;color:#e0e0e0;font-weight:bold;">Packages</div>
<div class="a" style="left:1230px;top:756px;width:232px;height:27px;background:#3e3e3e;"></div>
<div class="a" style="left:1230px;top:782px;width:232px;height:1px;background:#2e2e2e;"></div>
<div class="a t" style="left:1235px;top:760.88px;font-size:15.5px;color:#d2d2d2;font-weight:bold;">Assets</div>
<svg class="a" style="left:1252px;top:787px;" width="15" height="13" viewBox="0 0 15 13"><path d="M0 1.5Q0 0 1.5 0H6L8 2H13.5Q15 2 15 3.5V11.5Q15 13 13.5 13H1.5Q0 13 0 11.5Z" fill="#c4c4c4"/></svg>
<div class="a t" style="left:1272px;top:785.88px;font-size:15.5px;color:#d2d2d2;">Material</div>
<svg class="a" style="left:1252px;top:807px;" width="15" height="13" viewBox="0 0 15 13"><path d="M0 1.5Q0 0 1.5 0H6L8 2H13.5Q15 2 15 3.5V11.5Q15 13 13.5 13H1.5Q0 13 0 11.5Z" fill="#c4c4c4"/></svg>
<div class="a t" style="left:1272px;top:805.88px;font-size:15.5px;color:#d2d2d2;">Prefabs</div>
<svg class="a" style="left:1252px;top:827px;" width="15" height="13" viewBox="0 0 15 13"><path d="M0 1.5Q0 0 1.5 0H6L8 2H13.5Q15 2 15 3.5V11.5Q15 13 13.5 13H1.5Q0 13 0 11.5Z" fill="#c4c4c4"/></svg>
<div class="a t" style="left:1272px;top:825.88px;font-size:15.5px;color:#d2d2d2;">Scenes</div>
<svg class="a" style="left:1252px;top:847px;" width="15" height="13" viewBox="0 0 15 13"><path d="M0 1.5Q0 0 1.5 0H6L8 2H13.5Q15 2 15 3.5V11.5Q15 13 13.5 13H1.5Q0 13 0 11.5Z" fill="#c4c4c4"/></svg>
<div class="a t" style="left:1272px;top:845.88px;font-size:15.5px;color:#d2d2d2;">Scripts</div>
<svg class="a" style="left:1252px;top:867px;" width="15" height="13" viewBox="0 0 15 13"><path d="M0 1.5Q0 0 1.5 0H6L8 2H13.5Q15 2 15 3.5V11.5Q15 13 13.5 13H1.5Q0 13 0 11.5Z" fill="#c4c4c4"/></svg>
<div class="a t" style="left:1272px;top:865.88px;font-size:15.5px;color:#d2d2d2;">Settings</div>
<svg class="a" style="left:1252px;top:887px;" width="15" height="13" viewBox="0 0 15 13"><path d="M0 1.5Q0 0 1.5 0H6L8 2H13.5Q15 2 15 3.5V11.5Q15 13 13.5 13H1.5Q0 13 0 11.5Z" fill="#c4c4c4"/></svg>
<div class="a t" style="left:1272px;top:885.88px;font-size:15.5px;color:#d2d2d2;">TextMesh Pro</div>
<svg class="a" style="left:1252px;top:907px;" width="15" height="13" viewBox="0 0 15 13"><path d="M0 1.5Q0 0 1.5 0H6L8 2H13.5Q15 2 15 3.5V11.5Q15 13 13.5 13H1.5Q0 13 0 11.5Z" fill="#c4c4c4"/></svg>
<div class="a t" style="left:1272px;top:905.88px;font-size:15.5px;color:#d2d2d2;">TutorialInfo</div>
<svg class="a" style="left:1251px;top:925px;" width="20" height="18" viewBox="0 0 20 18"><g fill="none" stroke="#5ab0e0" stroke-width="1.3"><path d="M8 1L14 4V11L8 14L2 11V4Z"/><path d="M2 4L8 7L14 4M8 7V14"/></g><path d="M14 9Q12 9 12 11.5T11 14Q12 14 12 16.5T14 18M17 9Q19 9 19 11.5T20 14Q19 14 19 16.5T17 18" fill="none" stroke="#e05a2a" stroke-width="1.4"/></svg>
<div class="a t" style="left:1272px;top:925.88px;font-size:15.5px;color:#d2d2d2;">DefaultNetworkPrefabs</div>
<svg class="a" style="left:1234px;top:948px;" width="8" height="10" viewBox="0 0 8 10"><path d="M0 0L8 5L0 10Z" fill="#8a8a8a"/></svg>
<svg class="a" style="left:1250px;top:945px;" width="19" height="17" viewBox="0 0 19 17"><path d="M1 2L9 3V16L1 15Z" fill="#e0e0e0"/><path d="M9 3L17 2V15L9 16Z" fill="#bdbdbd"/><path d="M14 6V13M12 11L14 14L16 11" stroke="#1a8fe0" stroke-width="1.8" fill="none"/></svg>
<div class="a t" style="left:1272px;top:945.88px;font-size:15.5px;color:#d2d2d2;">InputSystem_Actions</div>
<svg class="a" style="left:1252px;top:965px;" width="16" height="17" viewBox="0 0 16 17"><path d="M1 1H11L15 5V16H1Z" fill="#ececec"/><path d="M6 5L5 14M10 5L9 14M3.5 8H12.5M3 11H12" stroke="#2e9a3e" stroke-width="1.3"/></svg>
<div class="a t" style="left:1272px;top:965.88px;font-size:15.5px;color:#d2d2d2;">PlayerControls</div>
<svg class="a" style="left:1234px;top:988px;" width="8" height="10" viewBox="0 0 8 10"><path d="M0 0L8 5L0 10Z" fill="#8a8a8a"/></svg>
<svg class="a" style="left:1250px;top:985px;" width="19" height="17" viewBox="0 0 19 17"><path d="M1 2L9 3V16L1 15Z" fill="#e0e0e0"/><path d="M9 3L17 2V15L9 16Z" fill="#bdbdbd"/><path d="M14 6V13M12 11L14 14L16 11" stroke="#1a8fe0" stroke-width="1.8" fill="none"/></svg>
<div class="a t" style="left:1272px;top:985.88px;font-size:15.5px;color:#d2d2d2;">PlayerControls</div>
<svg class="a" style="left:1251px;top:1005px;" width="20" height="18" viewBox="0 0 20 18"><g fill="none" stroke="#5ab0e0" stroke-width="1.3"><path d="M8 1L14 4V11L8 14L2 11V4Z"/><path d="M2 4L8 7L14 4M8 7V14"/></g><path d="M14 9Q12 9 12 11.5T11 14Q12 14 12 16.5T14 18M17 9Q19 9 19 11.5T20 14Q19 14 19 16.5T17 18" fill="none" stroke="#e05a2a" stroke-width="1.4"/></svg>
<div class="a t" style="left:1272px;top:1005.88px;font-size:15.5px;color:#d2d2d2;">Readme</div>
<div class="a" style="left:1230px;top:1085px;width:232px;height:1px;background:#2e2e2e;"></div>
<div class="a" style="left:1230px;top:1086px;width:232px;height:26px;background:#414141;"></div>
<div class="a" style="left:1384px;top:1098px;width:58px;height:3px;background:#5a5a5a;border-radius:1px;"></div>
<svg class="a" style="left:1372px;top:1093px;" width="14" height="14" viewBox="0 0 14 14"><circle cx="7" cy="7" r="6.5" fill="#9a9a9a"/></svg>
<div class="a" style="left:1462px;top:99px;width:2px;height:1013px;background:#131313;"></div>
<div class="a" style="left:1464px;top:99px;width:119px;height:31px;background:#383838;border-radius:5px 5px 0 0;"></div>
<div class="a" style="left:1464px;top:99px;width:119px;height:3px;background:#3a79bb;border-radius:3px 3px 0 0;"></div>
<svg class="a" style="left:1477px;top:108px;" width="13" height="13" viewBox="0 0 13 13"><circle cx="6.5" cy="6.5" r="6.5" fill="#c4c4c4"/><rect x="5.5" y="5.5" width="2" height="5" fill="#383838"/><circle cx="6.5" cy="3.3" r="1.2" fill="#383838"/></svg>
<div class="a t" style="left:1495px;top:107.38px;font-size:15.5px;color:#c4c4c4;">Inspector</div>
<div class="a t" style="left:1595px;top:107.38px;font-size:15.5px;color:#c4c4c4;">Multiplayer Play Mode</div>
<svg class="a" style="left:1872px;top:108px;" width="12" height="14" viewBox="0 0 12 14"><path d="M3 6V3.5a2.5 2.5 0 0 1 5 0" fill="none" stroke="#c4c4c4" stroke-width="1.4"/><rect x="1" y="6.5" width="10" height="6.5" fill="none" stroke="#c4c4c4" stroke-width="1.4"/></svg>
<svg class="a" style="left:1896px;top:106px;" width="6" height="16" viewBox="0 0 6 16"><circle cx="3" cy="3" r="1.5" fill="#c4c4c4"/><circle cx="3" cy="8" r="1.5" fill="#c4c4c4"/><circle cx="3" cy="13" r="1.5" fill="#c4c4c4"/></svg>
<div class="a" style="left:1464px;top:129px;width:450px;height:983px;background:#383838;"></div>
<svg class="a" style="left:1472px;top:141px;" width="27" height="27" viewBox="0 0 27 27"><g fill="none" stroke="#c8c8c8" stroke-width="1.6" stroke-linejoin="round"><path d="M13.5 2L25 8V20L13.5 26L2 20V8Z"/><path d="M2 8L13.5 14L25 8M13.5 14V26"/></g></svg>
<svg class="a" style="left:1496px;top:169px;" width="10" height="6" viewBox="0 0 10 6"><path d="M0 0H10L5 6Z" fill="#c4c4c4"/></svg>
<div class="a" style="left:1520px;top:143px;width:17px;height:18px;background:#262626;border-radius:3px;border:1px solid #1e1e1e;"></div>
<svg class="a" style="left:1522px;top:146px;" width="13" height="11" viewBox="0 0 13 11"><path d="M1.5 5.5L5 9L11.5 1.5" fill="none" stroke="#ececec" stroke-width="2"/></svg>
<div class="a" style="left:1545px;top:140px;width:271px;height:23px;background:#2a2a2a;border-radius:4px;border:1px solid #222;"></div>
<div class="a t" style="left:1550px;top:144.38px;font-size:15.5px;color:#e0e0e0;font-weight:bold;">Bullet</div>
<div class="a" style="left:1820px;top:143px;width:17px;height:18px;background:#262626;border-radius:3px;border:1px solid #1e1e1e;"></div>
<div class="a t" style="left:1843px;top:143.88px;font-size:15.5px;color:#c4c4c4;">Static</div>
<svg class="a" style="left:1897.5px;top:148.5px;" width="10" height="6" viewBox="0 0 10 6"><path d="M0 0H10L5.0 6Z" fill="#c4c4c4"/></svg>
<div class="a t" style="left:1514px;top:173.38px;font-size:15.5px;color:#c4c4c4;">Tag</div>
<div class="a" style="left:1545px;top:171px;width:160px;height:22px;background:#515151;border-radius:4px;border:1px solid #454545;"></div>
<div class="a t" style="left:1550px;top:173.38px;font-size:15.5px;color:#d2d2d2;">Untagged</div>
<svg class="a" style="left:1687.0px;top:179.5px;" width="10" height="6" viewBox="0 0 10 6"><path d="M0 0H10L5.0 6Z" fill="#c4c4c4"/></svg>
<div class="a t" style="left:1720px;top:173.38px;font-size:15.5px;color:#c4c4c4;">Layer</div>
<div class="a" style="left:1765px;top:171px;width:145px;height:22px;background:#515151;border-radius:4px;border:1px solid #454545;"></div>
<div class="a t" style="left:1770px;top:173.38px;font-size:15.5px;color:#d2d2d2;">Default</div>
<svg class="a" style="left:1895.0px;top:179.5px;" width="10" height="6" viewBox="0 0 10 6"><path d="M0 0H10L5.0 6Z" fill="#c4c4c4"/></svg>
<div class="a" style="left:1464px;top:203px;width:450px;height:1px;background:#242424;"></div>
<div class="a" style="left:1464px;top:204px;width:450px;height:27px;background:#3e3e3e;"></div>
<svg class="a" style="left:1472px;top:213px;" width="10" height="9" viewBox="0 0 10 9"><path d="M0 0H10L5 9Z" fill="#8a8a8a"/></svg>
<svg class="a" style="left:1490px;top:209px;" width="18" height="18" viewBox="0 0 18 18"><path d="M9 1.5V8" stroke="#a6e23b" stroke-width="2.6" stroke-linecap="round"/><path d="M8 9.5L2.5 13" stroke="#4fc3f7" stroke-width="2.6" stroke-linecap="round"/><path d="M10 9.5L15.5 13" stroke="#f06a3a" stroke-width="2.6" stroke-linecap="round"/></svg>
<div class="a t" style="left:1539px;top:210.38px;font-size:15.5px;color:#e0e0e0;font-weight:bold;">Transform</div>
<svg class="a" style="left:1845px;top:211px;" width="13" height="13" viewBox="0 0 13 13"><circle cx="6.5" cy="6.5" r="6.5" fill="#c4c4c4"/><text x="6.5" y="11" font-size="11" font-weight="bold" text-anchor="middle" fill="#3e3e3e" font-family="Liberation Sans">?</text></svg>
<svg class="a" style="left:1869px;top:210px;" width="15" height="15" viewBox="0 0 15 15"><path d="M1 4H14M1 11H14" stroke="#c4c4c4" stroke-width="1.5"/><rect x="9" y="1" width="2" height="6" fill="#c4c4c4"/><rect x="4" y="8" width="2" height="6" fill="#c4c4c4"/></svg>
<svg class="a" style="left:1898px;top:209.5px;" width="6" height="16" viewBox="0 0 6 16"><circle cx="3" cy="3" r="1.5" fill="#c4c4c4"/><circle cx="3" cy="8" r="1.5" fill="#c4c4c4"/><circle cx="3" cy="13" r="1.5" fill="#c4c4c4"/></svg>
<div class="a" style="left:1466px;top:230px;width:448px;height:91px;background:#383838;"></div>
<div class="a t" style="left:1488px;top:239.78px;font-size:15.5px;color:#c4c4c4;">Position</div>
<div class="a t" style="left:1646.0px;top:239.78px;font-size:15.5px;color:#b0b0b0;">X</div>
<div class="a" style="left:1663.5px;top:236.3px;width:66px;height:22px;background:#2a2a2a;border-radius:4px;border:1px solid #232323;"></div>
<div class="a t" style="left:1667.5px;top:240.18px;font-size:15.5px;color:#d2d2d2;">0</div>
<div class="a t" style="left:1736.5px;top:239.78px;font-size:15.5px;color:#b0b0b0;">Y</div>
<div class="a" style="left:1754px;top:236.3px;width:66px;height:22px;background:#2a2a2a;border-radius:4px;border:1px solid #232323;"></div>
<div class="a t" style="left:1758px;top:240.18px;font-size:15.5px;color:#d2d2d2;">0</div>
<div class="a t" style="left:1828.0px;top:239.78px;font-size:15.5px;color:#b0b0b0;">Z</div>
<div class="a" style="left:1845.5px;top:236.3px;width:66px;height:22px;background:#2a2a2a;border-radius:4px;border:1px solid #232323;"></div>
<div class="a t" style="left:1849.5px;top:240.18px;font-size:15.5px;color:#d2d2d2;">0</div>
<div class="a t" style="left:1488px;top:264.78px;font-size:15.5px;color:#c4c4c4;">Rotation</div>
<div class="a t" style="left:1646.0px;top:264.78px;font-size:15.5px;color:#b0b0b0;">X</div>
<div class="a" style="left:1663.5px;top:261.3px;width:66px;height:22px;background:#2a2a2a;border-radius:4px;border:1px solid #232323;"></div>
<div class="a t" style="left:1667.5px;top:265.18px;font-size:15.5px;color:#d2d2d2;">0</div>
<div class="a t" style="left:1736.5px;top:264.78px;font-size:15.5px;color:#b0b0b0;">Y</div>
<div class="a" style="left:1754px;top:261.3px;width:66px;height:22px;background:#2a2a2a;border-radius:4px;border:1px solid #232323;"></div>
<div class="a t" style="left:1758px;top:265.18px;font-size:15.5px;color:#d2d2d2;">0</div>
<div class="a t" style="left:1828.0px;top:264.78px;font-size:15.5px;color:#b0b0b0;">Z</div>
<div class="a" style="left:1845.5px;top:261.3px;width:66px;height:22px;background:#2a2a2a;border-radius:4px;border:1px solid #232323;"></div>
<div class="a t" style="left:1849.5px;top:265.18px;font-size:15.5px;color:#d2d2d2;">0</div>
<div class="a t" style="left:1488px;top:289.78px;font-size:15.5px;color:#c4c4c4;">Scale</div>
<div class="a t" style="left:1646.0px;top:289.78px;font-size:15.5px;color:#b0b0b0;">X</div>
<div class="a" style="left:1663.5px;top:286.3px;width:66px;height:22px;background:#2a2a2a;border-radius:4px;border:1px solid #232323;"></div>
<div class="a t" style="left:1667.5px;top:290.18px;font-size:15.5px;color:#d2d2d2;">0.2</div>
<div class="a t" style="left:1736.5px;top:289.78px;font-size:15.5px;color:#b0b0b0;">Y</div>
<div class="a" style="left:1754px;top:286.3px;width:66px;height:22px;background:#2a2a2a;border-radius:4px;border:1px solid #232323;"></div>
<div class="a t" style="left:1758px;top:290.18px;font-size:15.5px;color:#d2d2d2;">0.2</div>
<div class="a t" style="left:1828.0px;top:289.78px;font-size:15.5px;color:#b0b0b0;">Z</div>
<div class="a" style="left:1845.5px;top:286.3px;width:66px;height:22px;background:#2a2a2a;border-radius:4px;border:1px solid #232323;"></div>
<div class="a t" style="left:1849.5px;top:290.18px;font-size:15.5px;color:#d2d2d2;">0.2</div>
<svg class="a" style="left:1617px;top:291px;" width="17" height="12" viewBox="0 0 17 12"><rect x="1" y="1.5" width="15" height="9" rx="4.5" fill="none" stroke="#c4c4c4" stroke-width="1.5" stroke-dasharray="6 2.5"/><path d="M5 6H12" stroke="#c4c4c4" stroke-width="1.5"/></svg>
<div class="a" style="left:1464px;top:321px;width:450px;height:1px;background:#242424;"></div>
<div class="a" style="left:1464px;top:322px;width:450px;height:27px;background:#3e3e3e;"></div>
<svg class="a" style="left:1473px;top:330px;" width="8" height="11" viewBox="0 0 8 11"><path d="M0 0L8 5.5L0 11Z" fill="#8a8a8a"/></svg>
<svg class="a" style="left:1490px;top:327px;" width="18" height="18" viewBox="0 0 18 18"><g fill="none" stroke="#4fb0e8" stroke-width="1.3"><rect x="1" y="1" width="16" height="16"/><path d="M6.3 1V17M11.7 1V17M1 6.3H17M1 11.7H17"/></g></svg>
<div class="a t" style="left:1539px;top:328.38px;font-size:15.5px;color:#e0e0e0;font-weight:bold;">Sphere (Mesh Filter)</div>
<svg class="a" style="left:1845px;top:329px;" width="13" height="13" viewBox="0 0 13 13"><circle cx="6.5" cy="6.5" r="6.5" fill="#c4c4c4"/><text x="6.5" y="11" font-size="11" font-weight="bold" text-anchor="middle" fill="#3e3e3e" font-family="Liberation Sans">?</text></svg>
<svg class="a" style="left:1869px;top:328px;" width="15" height="15" viewBox="0 0 15 15"><path d="M1 4H14M1 11H14" stroke="#c4c4c4" stroke-width="1.5"/><rect x="9" y="1" width="2" height="6" fill="#c4c4c4"/><rect x="4" y="8" width="2" height="6" fill="#c4c4c4"/></svg>
<svg class="a" style="left:1898px;top:327.5px;" width="6" height="16" viewBox="0 0 6 16"><circle cx="3" cy="3" r="1.5" fill="#c4c4c4"/><circle cx="3" cy="8" r="1.5" fill="#c4c4c4"/><circle cx="3" cy="13" r="1.5" fill="#c4c4c4"/></svg>
<div class="a" style="left:1464px;top:349px;width:450px;height:1px;background:#242424;"></div>
<div class="a" style="left:1464px;top:350px;width:450px;height:27px;background:#3e3e3e;"></div>
<svg class="a" style="left:1473px;top:358px;" width="8" height="11" viewBox="0 0 8 11"><path d="M0 0L8 5.5L0 11Z" fill="#8a8a8a"/></svg>
<svg class="a" style="left:1490px;top:355px;" width="18" height="18" viewBox="0 0 18 18"><g fill="none" stroke="#4fb0e8" stroke-width="1.3"><path d="M1 13V1H17V9M6.3 1V13M11.7 1V9M1 6.3H17M1 11.7H6"/></g><path d="M6 14.5C8.5 10.5 15.5 10.5 18 14.5C15.5 18.5 8.5 18.5 6 14.5Z" fill="#e0e0e0"/><circle cx="12" cy="14.5" r="2" fill="#3e3e3e"/></svg>
<div class="a" style="left:1514px;top:355px;width:17px;height:17px;background:#262626;border-radius:3px;border:1px solid #1e1e1e;"></div>
<svg class="a" style="left:1516px;top:358px;" width="13" height="11" viewBox="0 0 13 11"><path d="M1.5 5.5L5 9L11.5 1.5" fill="none" stroke="#ececec" stroke-width="2"/></svg>
<div class="a t" style="left:1539px;top:356.38px;font-size:15.5px;color:#e0e0e0;font-weight:bold;">Mesh Renderer</div>
<svg class="a" style="left:1845px;top:357px;" width="13" height="13" viewBox="0 0 13 13"><circle cx="6.5" cy="6.5" r="6.5" fill="#c4c4c4"/><text x="6.5" y="11" font-size="11" font-weight="bold" text-anchor="middle" fill="#3e3e3e" font-family="Liberation Sans">?</text></svg>
<svg class="a" style="left:1869px;top:356px;" width="15" height="15" viewBox="0 0 15 15"><path d="M1 4H14M1 11H14" stroke="#c4c4c4" stroke-width="1.5"/><rect x="9" y="1" width="2" height="6" fill="#c4c4c4"/><rect x="4" y="8" width="2" height="6" fill="#c4c4c4"/></svg>
<svg class="a" style="left:1898px;top:355.5px;" width="6" height="16" viewBox="0 0 6 16"><circle cx="3" cy="3" r="1.5" fill="#c4c4c4"/><circle cx="3" cy="8" r="1.5" fill="#c4c4c4"/><circle cx="3" cy="13" r="1.5" fill="#c4c4c4"/></svg>
<div class="a" style="left:1464px;top:377px;width:450px;height:1px;background:#242424;"></div>
<div class="a" style="left:1464px;top:378px;width:450px;height:27px;background:#3e3e3e;"></div>
<svg class="a" style="left:1473px;top:386px;" width="8" height="11" viewBox="0 0 8 11"><path d="M0 0L8 5.5L0 11Z" fill="#8a8a8a"/></svg>
<svg class="a" style="left:1490px;top:383px;" width="18" height="18" viewBox="0 0 18 18"><ellipse cx="9" cy="9" rx="8.5" ry="8" fill="#a6e23b"/><path d="M1 9.5Q9 6 17 9.5" stroke="#3e3e3e" stroke-width="1.6" fill="none"/></svg>
<div class="a" style="left:1514px;top:383px;width:17px;height:17px;background:#262626;border-radius:3px;border:1px solid #1e1e1e;"></div>
<svg class="a" style="left:1516px;top:386px;" width="13" height="11" viewBox="0 0 13 11"><path d="M1.5 5.5L5 9L11.5 1.5" fill="none" stroke="#ececec" stroke-width="2"/></svg>
<div class="a t" style="left:1539px;top:384.38px;font-size:15.5px;color:#e0e0e0;font-weight:bold;">Sphere Collider</div>
<svg class="a" style="left:1845px;top:385px;" width="13" height="13" viewBox="0 0 13 13"><circle cx="6.5" cy="6.5" r="6.5" fill="#c4c4c4"/><text x="6.5" y="11" font-size="11" font-weight="bold" text-anchor="middle" fill="#3e3e3e" font-family="Liberation Sans">?</text></svg>
<svg class="a" style="left:1869px;top:384px;" width="15" height="15" viewBox="0 0 15 15"><path d="M1 4H14M1 11H14" stroke="#c4c4c4" stroke-width="1.5"/><rect x="9" y="1" width="2" height="6" fill="#c4c4c4"/><rect x="4" y="8" width="2" height="6" fill="#c4c4c4"/></svg>
<svg class="a" style="left:1898px;top:383.5px;" width="6" height="16" viewBox="0 0 6 16"><circle cx="3" cy="3" r="1.5" fill="#c4c4c4"/><circle cx="3" cy="8" r="1.5" fill="#c4c4c4"/><circle cx="3" cy="13" r="1.5" fill="#c4c4c4"/></svg>
<div class="a" style="left:1464px;top:405px;width:450px;height:1px;background:#242424;"></div>
<div class="a" style="left:1464px;top:406px;width:450px;height:27px;background:#3e3e3e;"></div>
<svg class="a" style="left:1472px;top:415px;" width="10" height="9" viewBox="0 0 10 9"><path d="M0 0H10L5 9Z" fill="#8a8a8a"/></svg>
<svg class="a" style="left:1490px;top:411px;" width="18" height="18" viewBox="0 0 18 18"><circle cx="9" cy="9" r="8" fill="none" stroke="#a6e23b" stroke-width="1.6"/><path d="M9 1A8 8 0 0 1 17 9H9Z M9 9H1A8 8 0 0 0 9 17Z" fill="#a6e23b"/><path d="M9 1V17M1 9H17" stroke="#3e3e3e" stroke-width="0.8"/></svg>
<div class="a t" style="left:1539px;top:412.38px;font-size:15.5px;color:#e0e0e0;font-weight:bold;">Rigidbody</div>
<svg class="a" style="left:1845px;top:413px;" width="13" height="13" viewBox="0 0 13 13"><circle cx="6.5" cy="6.5" r="6.5" fill="#c4c4c4"/><text x="6.5" y="11" font-size="11" font-weight="bold" text-anchor="middle" fill="#3e3e3e" font-family="Liberation Sans">?</text></svg>
<svg class="a" style="left:1869px;top:412px;" width="15" height="15" viewBox="0 0 15 15"><path d="M1 4H14M1 11H14" stroke="#c4c4c4" stroke-width="1.5"/><rect x="9" y="1" width="2" height="6" fill="#c4c4c4"/><rect x="4" y="8" width="2" height="6" fill="#c4c4c4"/></svg>
<svg class="a" style="left:1898px;top:411.5px;" width="6" height="16" viewBox="0 0 6 16"><circle cx="3" cy="3" r="1.5" fill="#c4c4c4"/><circle cx="3" cy="8" r="1.5" fill="#c4c4c4"/><circle cx="3" cy="13" r="1.5" fill="#c4c4c4"/></svg>
<div class="a" style="left:1466px;top:433px;width:448px;height:391px;background:#383838;"></div>
<div class="a t" style="left:1488px;top:441.88px;font-size:15.5px;color:#c4c4c4;">Mass</div>
<div class="a" style="left:1645px;top:438.5px;width:266px;height:22px;background:#2a2a2a;border-radius:4px;border:1px solid #232323;"></div>
<div class="a t" style="left:1650px;top:442.88px;font-size:15.5px;color:#d2d2d2;">1</div>
<div class="a t" style="left:1488px;top:466.88px;font-size:15.5px;color:#c4c4c4;">Linear Damping</div>
<div class="a" style="left:1645px;top:463.5px;width:266px;height:22px;background:#2a2a2a;border-radius:4px;border:1px solid #232323;"></div>
<div class="a t" style="left:1650px;top:467.88px;font-size:15.5px;color:#d2d2d2;">0</div>
<div class="a t" style="left:1488px;top:491.88px;font-size:15.5px;color:#c4c4c4;">Angular Damping</div>
<div class="a" style="left:1645px;top:488.5px;width:266px;height:22px;background:#2a2a2a;border-radius:4px;border:1px solid #232323;"></div>
<div class="a t" style="left:1650px;top:492.88px;font-size:15.5px;color:#d2d2d2;">0.05</div>
<div class="a" style="left:1488px;top:510px;width:155px;height:26px;overflow:hidden">
<div class="a t" style="left:0px;top:6.88px;font-size:15.5px;color:#c4c4c4;">Automatic Center Of Mass</div>
</div>
<div class="a" style="left:1644.5px;top:516.5px;width:17px;height:17px;background:#262626;border-radius:3px;border:1px solid #1e1e1e;"></div>
<svg class="a" style="left:1646.5px;top:519.5px;" width="13" height="11" viewBox="0 0 13 11"><path d="M1.5 5.5L5 9L11.5 1.5" fill="none" stroke="#ececec" stroke-width="2"/></svg>
<div class="a t" style="left:1488px;top:541.88px;font-size:15.5px;color:#c4c4c4;">Automatic Tensor</div>
<div class="a" style="left:1644.5px;top:541.2px;width:17px;height:17px;background:#262626;border-radius:3px;border:1px solid #1e1e1e;"></div>
<svg class="a" style="left:1646.5px;top:544.2px;" width="13" height="11" viewBox="0 0 13 11"><path d="M1.5 5.5L5 9L11.5 1.5" fill="none" stroke="#ececec" stroke-width="2"/></svg>
<div class="a t" style="left:1488px;top:566.88px;font-size:15.5px;color:#c4c4c4;">Use Gravity</div>
<div class="a" style="left:1644.5px;top:566.2px;width:17px;height:17px;background:#262626;border-radius:3px;border:1px solid #1e1e1e;"></div>
<div class="a t" style="left:1488px;top:591.88px;font-size:15.5px;color:#c4c4c4;">Is Kinematic</div>
<div class="a" style="left:1644.5px;top:591.2px;width:17px;height:17px;background:#262626;border-radius:3px;border:1px solid #1e1e1e;"></div>
<div class="a t" style="left:1488px;top:616.88px;font-size:15.5px;color:#c4c4c4;">Interpolate</div>
<div class="a" style="left:1645px;top:614px;width:266px;height:21px;background:#515151;border-radius:4px;border:1px solid #454545;"></div>
<div class="a t" style="left:1650px;top:616.38px;font-size:15.5px;color:#d2d2d2;">None</div>
<svg class="a" style="left:1894.5px;top:621.5px;" width="10" height="6" viewBox="0 0 10 6"><path d="M0 0H10L5.0 6Z" fill="#c4c4c4"/></svg>
<div class="a t" style="left:1488px;top:641.88px;font-size:15.5px;color:#c4c4c4;">Collision Detection</div>
<div class="a" style="left:1645px;top:639px;width:266px;height:21px;background:#515151;border-radius:4px;border:1px solid #454545;"></div>
<div class="a t" style="left:1650px;top:641.38px;font-size:15.5px;color:#d2d2d2;">Continuous</div>
<svg class="a" style="left:1894.5px;top:646.5px;" width="10" height="6" viewBox="0 0 10 6"><path d="M0 0H10L5.0 6Z" fill="#c4c4c4"/></svg>
<svg class="a" style="left:1472px;top:670px;" width="10" height="9" viewBox="0 0 10 9"><path d="M0 0H10L5 9Z" fill="#8a8a8a"/></svg>
<div class="a t" style="left:1488px;top:666.88px;font-size:15.5px;color:#c4c4c4;">Constraints</div>
<div class="a t" style="left:1506px;top:691.88px;font-size:15.5px;color:#c4c4c4;">Freeze Position</div>
<div class="a" style="left:1644.5px;top:691px;width:17px;height:17px;background:#262626;border-radius:3px;border:1px solid #1e1e1e;"></div>
<div class="a t" style="left:1666.5px;top:691.88px;font-size:15.5px;color:#b0b0b0;">X</div>
<div class="a" style="left:1681.5px;top:691px;width:17px;height:17px;background:#262626;border-radius:3px;border:1px solid #1e1e1e;"></div>
<div class="a t" style="left:1703.5px;top:691.88px;font-size:15.5px;color:#b0b0b0;">Y</div>
<div class="a" style="left:1718.5px;top:691px;width:17px;height:17px;background:#262626;border-radius:3px;border:1px solid #1e1e1e;"></div>
<div class="a t" style="left:1740.5px;top:691.88px;font-size:15.5px;color:#b0b0b0;">Z</div>
<div class="a t" style="left:1506px;top:716.88px;font-size:15.5px;color:#c4c4c4;">Freeze Rotation</div>
<div class="a" style="left:1644.5px;top:716px;width:17px;height:17px;background:#262626;border-radius:3px;border:1px solid #1e1e1e;"></div>
<div class="a t" style="left:1666.5px;top:716.88px;font-size:15.5px;color:#b0b0b0;">X</div>
<div class="a" style="left:1681.5px;top:716px;width:17px;height:17px;background:#262626;border-radius:3px;border:1px solid #1e1e1e;"></div>
<div class="a t" style="left:1703.5px;top:716.88px;font-size:15.5px;color:#b0b0b0;">Y</div>
<div class="a" style="left:1718.5px;top:716px;width:17px;height:17px;background:#262626;border-radius:3px;border:1px solid #1e1e1e;"></div>
<div class="a t" style="left:1740.5px;top:716.88px;font-size:15.5px;color:#b0b0b0;">Z</div>
<svg class="a" style="left:1472px;top:745px;" width="10" height="9" viewBox="0 0 10 9"><path d="M0 0H10L5 9Z" fill="#8a8a8a"/></svg>
<div class="a t" style="left:1488px;top:741.88px;font-size:15.5px;color:#c4c4c4;">Layer Overrides</div>
<div class="a t" style="left:1506px;top:766.88px;font-size:15.5px;color:#c4c4c4;">Include Layers</div>
<div class="a" style="left:1645px;top:764px;width:266px;height:21px;background:#515151;border-radius:4px;border:1px solid #454545;"></div>
<div class="a t" style="left:1650px;top:766.38px;font-size:15.5px;color:#d2d2d2;">Nothing</div>
<svg class="a" style="left:1894.5px;top:771.5px;" width="10" height="6" viewBox="0 0 10 6"><path d="M0 0H10L5.0 6Z" fill="#c4c4c4"/></svg>
<div class="a t" style="left:1506px;top:791.88px;font-size:15.5px;color:#c4c4c4;">Exclude Layers</div>
<div class="a" style="left:1645px;top:789px;width:266px;height:21px;background:#515151;border-radius:4px;border:1px solid #454545;"></div>
<div class="a t" style="left:1650px;top:791.38px;font-size:15.5px;color:#d2d2d2;">Nothing</div>
<svg class="a" style="left:1894.5px;top:796.5px;" width="10" height="6" viewBox="0 0 10 6"><path d="M0 0H10L5.0 6Z" fill="#c4c4c4"/></svg>
<div class="a" style="left:1464px;top:823px;width:450px;height:1px;background:#242424;"></div>
<div class="a" style="left:1464px;top:824px;width:450px;height:27px;background:#3e3e3e;"></div>
<svg class="a" style="left:1473px;top:832px;" width="8" height="11" viewBox="0 0 8 11"><path d="M0 0L8 5.5L0 11Z" fill="#8a8a8a"/></svg>
<svg class="a" style="left:1490px;top:829px;" width="18" height="18" viewBox="0 0 18 18"><path d="M2 0.5H11.5L16 5V17.5H2Z" fill="#ececec"/><path d="M7 5L6 14M11 5L10 14M4.5 8H13.5M4 11H13" stroke="#2e8a3e" stroke-width="1.3"/></svg>
<div class="a" style="left:1514px;top:829px;width:17px;height:17px;background:#262626;border-radius:3px;border:1px solid #1e1e1e;"></div>
<svg class="a" style="left:1516px;top:832px;" width="13" height="11" viewBox="0 0 13 11"><path d="M1.5 5.5L5 9L11.5 1.5" fill="none" stroke="#ececec" stroke-width="2"/></svg>
<div class="a t" style="left:1539px;top:830.38px;font-size:15.5px;color:#75a8ec;font-weight:bold;">Network Object</div>
<svg class="a" style="left:1845px;top:831px;" width="13" height="13" viewBox="0 0 13 13"><circle cx="6.5" cy="6.5" r="6.5" fill="#c4c4c4"/><text x="6.5" y="11" font-size="11" font-weight="bold" text-anchor="middle" fill="#3e3e3e" font-family="Liberation Sans">?</text></svg>
<svg class="a" style="left:1869px;top:830px;" width="15" height="15" viewBox="0 0 15 15"><path d="M1 4H14M1 11H14" stroke="#c4c4c4" stroke-width="1.5"/><rect x="9" y="1" width="2" height="6" fill="#c4c4c4"/><rect x="4" y="8" width="2" height="6" fill="#c4c4c4"/></svg>
<svg class="a" style="left:1898px;top:829.5px;" width="6" height="16" viewBox="0 0 6 16"><circle cx="3" cy="3" r="1.5" fill="#c4c4c4"/><circle cx="3" cy="8" r="1.5" fill="#c4c4c4"/><circle cx="3" cy="13" r="1.5" fill="#c4c4c4"/></svg>
<div class="a" style="left:1466px;top:851px;width:448px;height:68px;background:#383838;"></div>
<div class="a" style="left:1484px;top:859px;width:41px;height:41px;background:#444444;border-radius:2px;"></div>
<svg class="a" style="left:1486px;top:862px;" width="37" height="37" viewBox="0 0 37 37"><defs><radialGradient id="mg" cx="0.35" cy="0.3" r="0.75"><stop offset="0" stop-color="#7a7a7a"/><stop offset="0.6" stop-color="#3e3e3e"/><stop offset="1" stop-color="#222"/></radialGradient></defs><circle cx="18.5" cy="18.5" r="17" fill="url(#mg)"/></svg>
<div class="a t" style="left:1533px;top:859.38px;font-size:15.5px;color:#7a7a7a;">Lit (Material)</div>
<svg class="a" style="left:1860px;top:861px;" width="13" height="13" viewBox="0 0 13 13"><circle cx="6.5" cy="6.5" r="6.5" fill="#b0b0b0"/><text x="6.5" y="11" font-size="11" font-weight="bold" text-anchor="middle" fill="#383838" font-family="Liberation Sans">?</text></svg>
<svg class="a" style="left:1880px;top:860px;" width="15" height="15" viewBox="0 0 15 15"><path d="M1 4H14M1 11H14" stroke="#9a9a9a" stroke-width="1.5"/><rect x="9" y="1" width="2" height="6" fill="#9a9a9a"/><rect x="4" y="8" width="2" height="6" fill="#9a9a9a"/></svg>
<svg class="a" style="left:1903px;top:859px;" width="6" height="16" viewBox="0 0 6 16"><circle cx="3" cy="3" r="1.5" fill="#b0b0b0"/><circle cx="3" cy="8" r="1.5" fill="#b0b0b0"/><circle cx="3" cy="13" r="1.5" fill="#b0b0b0"/></svg>
<div class="a t" style="left:1530px;top:888.88px;font-size:15.5px;color:#7a7a7a;">Shader</div>
<div class="a" style="left:1595px;top:887px;width:195px;height:21px;background:#474747;border-radius:4px;"></div>
<div class="a" style="left:1600px;top:887px;width:173px;height:21px;overflow:hidden">
<div class="a t" style="left:0px;top:1.88px;font-size:15.5px;color:#8e8e8e;">Universal Render Pipeline/Lit</div>
</div>
<svg class="a" style="left:1773.5px;top:894.5px;" width="10" height="6" viewBox="0 0 10 6"><path d="M0 0H10L5.0 6Z" fill="#9a9a9a"/></svg>
<div class="a" style="left:1796px;top:887px;width:50px;height:21px;background:#474747;border-radius:4px;"></div>
<div class="a t" style="left:1803px;top:888.88px;font-size:15.5px;color:#8e8e8e;">Edit...</div>
<div class="a" style="left:1855px;top:887px;width:55px;height:21px;background:#474747;border-radius:4px;"></div>
<svg class="a" style="left:1866px;top:891px;" width="16" height="13" viewBox="0 0 16 13"><path d="M1 1.5L3 0V3Z" fill="#9a9a9a"/><path d="M5 1.5H15M5 6.5H15M5 11.5H15" stroke="#9a9a9a" stroke-width="1.4"/></svg>
<svg class="a" style="left:1892.5px;top:894.5px;" width="10" height="6" viewBox="0 0 10 6"><path d="M0 0H10L5.0 6Z" fill="#9a9a9a"/></svg>
<svg class="a" style="left:1473px;top:899px;" width="8" height="11" viewBox="0 0 8 11"><path d="M0 0L8 5.5L0 11Z" fill="#8a8a8a"/></svg>
<div class="a" style="left:1466px;top:919px;width:448px;height:1px;background:#444444;"></div>
<div class="a" style="left:1466px;top:932.5px;width:448px;height:1.5px;background:#202020;"></div>
<div class="a" style="left:1547px;top:945px;width:285px;height:28px;background:#585858;border-radius:4px;border:1px solid #303030;"></div>
<div class="a t" style="left:1633px;top:951.68px;font-size:15.5px;color:#d8d8d8;">Add Component</div>
<div class="a" style="left:1819px;top:1112px;width:1px;height:27px;background:#2a2a2a;"></div>
<div class="a" style="left:1852px;top:1112px;width:1px;height:27px;background:#2a2a2a;"></div>
<div class="a" style="left:1884px;top:1112px;width:1px;height:27px;background:#2a2a2a;"></div>
<svg class="a" style="left:1826px;top:1119px;" width="18" height="17" viewBox="0 0 18 17"><ellipse cx="9" cy="10" rx="5" ry="6" fill="#c4c4c4"/><circle cx="9" cy="4" r="2.6" fill="#c4c4c4"/><path d="M2 6L6 8.5M16 6L12 8.5M1 10.5H5M17 10.5H13M2 15L6 13M16 15L12 13" stroke="#c4c4c4" stroke-width="1.4"/><path d="M1 1L17 16" stroke="#131313" stroke-width="2.5"/><path d="M1 1L17 16" stroke="#c4c4c4" stroke-width="1.2"/></svg>
<svg class="a" style="left:1858px;top:1118px;" width="18" height="18" viewBox="0 0 18 18"><ellipse cx="9" cy="4" rx="7" ry="3" fill="#c4c4c4"/><path d="M2 7Q9 11 16 7V10Q9 14 2 10Z M2 12Q9 16 16 12V14Q9 18 2 14Z" fill="#c4c4c4"/><path d="M1 1L17 17" stroke="#131313" stroke-width="2.5"/><path d="M1 1L17 17" stroke="#c4c4c4" stroke-width="1.2"/></svg>
<svg class="a" style="left:1889px;top:1118px;" width="18" height="18" viewBox="0 0 18 18"><circle cx="9" cy="9" r="7.8" fill="none" stroke="#c4c4c4" stroke-width="1.4"/><path d="M5 9L8 12L13 6" fill="none" stroke="#c4c4c4" stroke-width="1.5"/></svg>
<svg class="a" style="left:0;top:0" width="1914" height="1139" viewBox="0 0 1914 1139"><path d="M1225.5 500.6L1135.3 376.6" stroke="#f4f4f4" stroke-width="1.3"/><path d="M1130.0 369.3L1139.9 375.7L1135.0 376.2L1133.1 380.7Z" fill="#f4f4f4"/><path d="M1341.0 424.1L1522.5 417.7" stroke="#f4f4f4" stroke-width="1.3"/><path d="M1531.5 417.4L1520.7 422.0L1523.0 417.7L1520.4 413.6Z" fill="#f4f4f4"/><path d="M1821.0 114.2L1888.9 196.9" stroke="#f4f4f4" stroke-width="1.3"/><path d="M1894.6 203.9L1884.4 198.1L1889.2 197.3L1890.9 192.7Z" fill="#f4f4f4"/><path d="M1665.1 213.0L1669.1 227.1" stroke="#f4f4f4" stroke-width="1.3"/><path d="M1671.5 235.8L1664.5 226.3L1669.2 227.6L1672.6 224.1Z" fill="#f4f4f4"/><path d="M1731.3 211.4L1749.7 228.1" stroke="#f4f4f4" stroke-width="1.3"/><path d="M1756.4 234.2L1745.4 229.9L1750.1 228.5L1751.1 223.7Z" fill="#f4f4f4"/><path d="M1815.3 210.3L1837.0 233.2" stroke="#f4f4f4" stroke-width="1.3"/><path d="M1843.2 239.7L1832.6 234.6L1837.3 233.5L1838.7 228.8Z" fill="#f4f4f4"/><path d="M1709.6 350.0L1691.4 319.0" stroke="#f4f4f4" stroke-width="1.3"/><path d="M1686.8 311.2L1696.0 318.6L1691.1 318.5L1688.8 322.8Z" fill="#f4f4f4"/><path d="M1772.9 339.7L1772.5 315.6" stroke="#f4f4f4" stroke-width="1.3"/><path d="M1772.4 306.6L1776.8 317.5L1772.5 315.1L1768.4 317.7Z" fill="#f4f4f4"/><path d="M1823.3 351.1L1844.3 315.5" stroke="#f4f4f4" stroke-width="1.3"/><path d="M1848.9 307.8L1846.9 319.4L1844.6 315.1L1839.7 315.1Z" fill="#f4f4f4"/><path d="M1802.9 550.3L1676.8 570.1" stroke="#f4f4f4" stroke-width="1.3"/><path d="M1667.9 571.5L1678.1 565.6L1676.3 570.2L1679.4 573.9Z" fill="#f4f4f4"/><path d="M1835.8 562.2L1743.4 632.0" stroke="#f4f4f4" stroke-width="1.3"/><path d="M1736.2 637.4L1742.4 627.4L1743.0 632.3L1747.5 634.1Z" fill="#f4f4f4"/><path d="M1133.2 622.1L1488.9 825.0" stroke="#f4f4f4" stroke-width="1.3"/><path d="M1658.1 1026.9L1648.4 974.0" stroke="#f4f4f4" stroke-width="1.3"/><path d="M1646.8 965.1L1652.9 975.2L1648.3 973.5L1644.6 976.7Z" fill="#f4f4f4"/><path d="M1661.5 1029.9L1690.5 976.4" stroke="#f4f4f4" stroke-width="1.3"/><path d="M1694.8 968.5L1693.2 980.2L1690.7 976.0L1685.9 976.2Z" fill="#f4f4f4"/></svg>
</body></html>
